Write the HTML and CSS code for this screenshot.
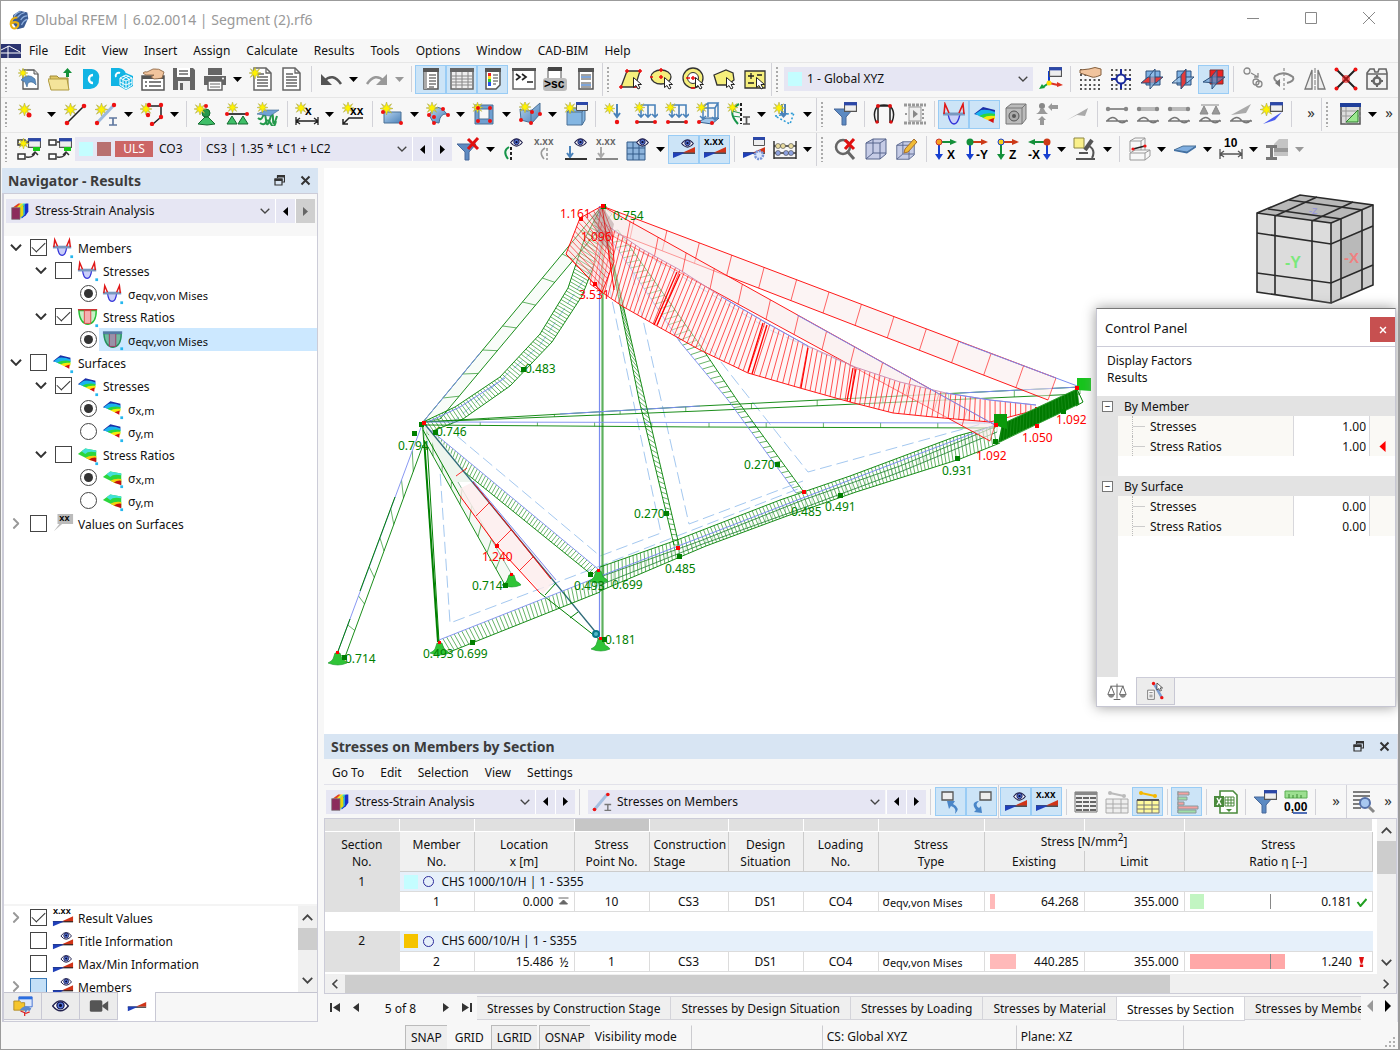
FILE: index.html
```html
<!DOCTYPE html>
<html lang="en">
<head>
<meta charset="utf-8">
<title>Dlubal RFEM | 6.02.0014 | Segment (2).rf6</title>
<link rel="stylesheet" href="styles.css">
</head>
<body>
<svg class="paint" width="0" height="0" aria-hidden="true"><linearGradient id="gb" x1="0" y1="0" x2="1" y2="1"><stop offset="0" stop-color="#b4d3f0"/><stop offset="1" stop-color="#4d82b8"/></linearGradient></svg>
<svg class="defs" aria-hidden="true">
<symbol id="tri" viewBox="0 0 9 5"><path d="M0 0h9L4.500 5z"/></symbol>
<symbol id="left" viewBox="0 0 5 9"><path d="M5 0v9L0 4.500z"/></symbol>
<symbol id="right" viewBox="0 0 5 9"><path d="M0 0v9l5-4.500z"/></symbol>
<symbol id="chev" viewBox="0 0 10 6"><path class="cv" d="M.7.700 5 5 9.300.7" fill="none" stroke="currentColor"/></symbol>
<symbol id="star" viewBox="0 0 14 14"><path d="M7 0l1.500 4.600L12.500 2 9.800 6l4.200 1-4.200 1 2.700 4-4-2.600L7 14 5.500 9.400 1.500 12 4.200 8 0 7l4.200-1L1.500 2l4 2.600z" fill="#fff200" stroke="#a8a44a" stroke-width=".6"/></symbol>
<symbol id="win" viewBox="0 0 12 9"><path d="M.5.500h11v8H.5z" fill="#eee" stroke="#555"/><path d="M0 0h12v3H0z" fill="#2b47a8"/></symbol>
<symbol id="eye" viewBox="0 0 14 10"><path d="M.5 5Q7-3.500 13.500 5 7 13 .5 5z" fill="#fff" stroke="#22224e" stroke-width="1.200"/><circle cx="7" cy="4.500" r="3" fill="#5577d8" stroke="#151552"/><circle cx="7" cy="4.500" r="1.300" fill="#0a0a30"/></symbol>
<symbol id="new" viewBox="0 0 24 24"><path d="M6 3h11l4 4v15H6z" fill="#fff" stroke="#555" stroke-width="1.300"/><path d="M17 3v4h4" fill="#ddd" stroke="#555"/><path d="M4 13q7-8 14-1l1 6q-4-5-8-2l-1 4-2-5z" fill="#5b8fc4" stroke="#3a658f" stroke-width=".6"/><use href="#star" x="1" y="1" width="10" height="10"/></symbol>
<symbol id="open" viewBox="0 0 24 24"><path d="M2 9h7l2 2h9v11H3z" fill="#e0c765" stroke="#a08a35"/><path d="M0 12h19l2 11H3z" fill="#f4e49a" stroke="#b09a40"/><path d="M18 10V6h-3l4.500-5L24 6h-3v4z" fill="#14903a"/></symbol>
<symbol id="dl" viewBox="0 0 24 24"><path d="M4 2h8a8 8 0 0 1 8 10 9 9 0 0 1-9 10H4z" fill="#12b4e4"/><path d="M14 8a4 4 0 1 0 0 8" fill="none" stroke="#fff" stroke-width="2.500"/></symbol>
<symbol id="cubes" viewBox="0 0 24 24"><path d="M1 1h8q6 1 7 6l-4 12H1z" fill="#12b4e4"/><path d="M16 6l7 3v10l-7 4-7-4V9z" fill="#12b4e4"/><path d="M16 8l6 3v7l-6 4-6-4v-7zM10 11l6 3 6-3M16 14v8M13 9l6 3v8M19 9l-6 3v8M10 15l6 3 6-3" fill="none" stroke="#fff"/><path d="M10 6a3 3 0 0 0-4 4" fill="none" stroke="#fff" stroke-width="2"/></symbol>
<symbol id="hand" viewBox="0 0 24 24"><path d="M1 9h22v14H1z" fill="#fff" stroke="#555" stroke-width="1.500"/><path d="M1 9h22v3H1z" fill="#555"/><path d="M4 15h2m2 0h12M4 19h2m2 0h12" stroke="#555" stroke-width="1.600"/><path d="M2 6q2-2 4-1l6-3q6-1 11 3l-2 6q-5 1-8 1l-3-2 3-2H5q-2-1-3-2z" fill="#f1c49d" stroke="#85603f" stroke-width=".8"/></symbol>
<symbol id="save" viewBox="0 0 24 24"><path d="M1 1h20l2 2v20H1z" fill="#666"/><path d="M5 1h13v9H5z" fill="#fff"/><path d="M7 4h9M7 7h9" stroke="#666" stroke-width="1.500"/><path d="M6 14h12v9H6z" fill="#eee"/><path d="M8 16h3v7H8z" fill="#666"/></symbol>
<symbol id="print" viewBox="0 0 24 24"><path d="M5 1h14v7H5z" fill="#666"/><path d="M1 9h22v9H1z" fill="#666"/><path d="M5 14h14v9H5z" fill="#fff" stroke="#666" stroke-width="1.500"/><path d="M7 17h10M7 20h10" stroke="#666"/><circle cx="20" cy="11.500" r="1" fill="#fff"/></symbol>
<symbol id="doc" viewBox="0 0 24 24"><path d="M3 1h12l5 5v17H3z" fill="#fff" stroke="#666" stroke-width="1.500"/><path d="M15 1v5h5M6 7h7M6 10h11M6 13h11M6 16h11M6 19h11" fill="none" stroke="#666" stroke-width="1.300"/></symbol>
<symbol id="docnew" viewBox="0 0 24 24"><use href="#doc" x="2" width="24" height="24"/><use href="#star" x="0" y="0" width="12" height="12"/></symbol>
<symbol id="undo" viewBox="0 0 24 24"><path d="M2 7v11h11z"/><path d="M5 14Q14 5 22 17" fill="none" stroke="currentColor" stroke-width="2.500"/></symbol>
<symbol id="pane" viewBox="0 0 24 24"><path d="M5 2h14v20H5z" fill="#fff" stroke="#555" stroke-width="1.500"/><path d="M4 1h16v4H4z" fill="#555"/><path d="M5 5h3v17H5z" fill="#aaa"/><path d="M10 8h7M10 11h7M10 14h7M10 17h7M10 20h5" stroke="#333" stroke-width="1.200"/></symbol>
<symbol id="panec" viewBox="0 0 24 24"><path d="M5 2h14v16l-4 4H5z" fill="#fff" stroke="#555" stroke-width="1.500"/><path d="M4 1h16v4H4z" fill="#555"/><path d="M7 6h3v3H7z" fill="#e22"/><path d="M7 9h3v3H7z" fill="#fd2"/><path d="M7 12h3v3H7z" fill="#3c3"/><path d="M7 15h3v4H7z" fill="#25e"/><path d="M12 8h5M12 11h5M12 14h5M12 17h3" stroke="#444"/></symbol>
<symbol id="paneb" viewBox="0 0 24 24"><path d="M5 2h14v20H5z" fill="#fff" stroke="#555" stroke-width="1.500"/><path d="M4 1h16v4H4z" fill="#555"/><path d="M7 8h10M7 12h10M7 16h10M7 20h10" stroke="#444"/><path d="M7 10h10M7 18h10" stroke="#58c" stroke-width="1.500"/></symbol>
<symbol id="grid" viewBox="0 0 24 24"><path d="M1 2h22v20H1z" fill="#eee" stroke="#666" stroke-width="1.500"/><path d="M0 1h24v4H0z" fill="#666"/><path d="M1 9h22M1 12h22M1 15h22M1 18h22M6 5v17M12 5v17M18 5v17" stroke="#888"/></symbol>
<symbol id="console" viewBox="0 0 24 24"><path d="M1 2h22v20H1z" fill="#fff" stroke="#666" stroke-width="1.500"/><path d="M0 1h24v3H0z" fill="#555"/><path d="M4 7l4 3-4 3M10 7l4 3-4 3M15 15h6" fill="none" stroke="#222" stroke-width="1.700"/></symbol>
<symbol id="sc" viewBox="0 0 24 24"><path d="M5 1h13v12H5z" fill="#fff" stroke="#555"/><path d="M5 0h14v4H5z" fill="#444"/><rect y="11" width="24" height="13" rx="3" fill="#bbb"/><text x="1" y="21" class="ib">&gt;sc</text></symbol>
<symbol id="cursor" viewBox="0 0 9 13"><path d="M.5.500v10L3 8.500 5 12l2-1-2-3.500h3.500z" fill="#fff" stroke="#222"/></symbol>
<symbol id="selp" viewBox="0 0 24 24"><path d="M8 4h13l-5 16H2z" fill="#f6ef7c" stroke="#333" stroke-width="1.300"/><path d="M6 4h4M8 2v4M19 4h4M21 2v4M0 20h4M2 18v4M14 20h4" stroke="#e11" stroke-width="1.500"/><use href="#cursor" x="14" y="10" width="9" height="13"/></symbol>
<symbol id="sele" viewBox="0 0 24 24"><ellipse cx="11" cy="10" rx="10" ry="7" fill="#f6ef7c" stroke="#333" stroke-width="1.300"/><path d="M9 10h4M11 8v4M9 3h4M11 1v4M0 10h3" stroke="#e11" stroke-width="1.500"/><use href="#cursor" x="14" y="10" width="9" height="13"/></symbol>
<symbol id="selr" viewBox="0 0 24 24"><circle cx="12" cy="11" r="10" fill="#f6ef7c" stroke="#333" stroke-width="1.300"/><circle cx="12" cy="11" r="5.500" fill="#fff" stroke="#333"/><path d="M10 11h4M12 9v4M10 21h4M5 11h4" stroke="#e11" stroke-width="1.500"/><use href="#cursor" x="14" y="10" width="9" height="13"/></symbol>
<symbol id="sell" viewBox="0 0 24 24"><path d="M2 8L14 3l7 3 1 7-7 5H5z" fill="#f6ef7c" stroke="#333" stroke-width="1.300"/><use href="#cursor" x="14" y="10" width="9" height="13"/></symbol>
<symbol id="selm" viewBox="0 0 24 24"><path d="M2 4h20v17H2z" fill="#f6ef7c" stroke="#333" stroke-width="1.300"/><path d="M5 9h6M8 6v6M5 16h6M14 8h5" stroke="#222" stroke-width="1.300"/><use href="#cursor" x="13" y="10" width="9" height="13"/></symbol>
<symbol id="axes" viewBox="0 0 24 24"><path d="M10 16V4" stroke="#0c3ad0" stroke-width="2"/><path d="M10 16l-6 4" stroke="#14a03a" stroke-width="2"/><path d="M0 22l3-5 3 4z" fill="#14a03a"/><path d="M10 16l9 2" stroke="#d32" stroke-width="2"/><path d="M24 18l-6-3v5z" fill="#d32"/><circle cx="10" cy="16" r="2.500" fill="#fd0"/><use href="#win" x="10" y="0" width="13" height="10"/></symbol>
<symbol id="dots" viewBox="0 0 24 24"><path d="M2 3h21M2 8h21M2 13h21M2 18h21M2 22h21" stroke="#555" stroke-width="2" stroke-dasharray="2 2.500"/></symbol>
<symbol id="dothand" viewBox="0 0 24 24"><use href="#dots" width="24" height="24"/><path d="M2 3l9-1q6-3 12 0v6q-7 3-9 2L2 6z" fill="#f1c49d" stroke="#85603f"/></symbol>
<symbol id="dotc" viewBox="0 0 24 24"><use href="#dots" width="24" height="24"/><path d="M12 2v20M2 12h20" stroke="#1a2a9a" stroke-width="2"/><circle cx="12" cy="12" r="4.500" fill="#fff" stroke="#1a2a9a" stroke-width="2"/></symbol>
<symbol id="pl1" viewBox="0 0 24 24"><path d="M6 4h14v14H6z" fill="#7fb2e4" stroke="#2c4f7a"/><path d="M1 16l7-6h15l-7 6z" fill="#e23b3b" stroke="#2c4f7a"/><path d="M10 22V8l5-6v14z" fill="#9cc4ea" fill-opacity=".6" stroke="#2c4f7a"/></symbol>
<symbol id="pl2" viewBox="0 0 24 24"><path d="M6 4h14v14H6z" fill="#7fb2e4" stroke="#2c4f7a"/><path d="M1 16l7-6h15l-7 6z" fill="#9cc4ea" fill-opacity=".7" stroke="#2c4f7a"/><path d="M10 22V8l5-6v14z" fill="#e23b3b" stroke="#2c4f7a"/></symbol>
<symbol id="pl3" viewBox="0 0 24 24"><path d="M8 3h13v14H8z" fill="#e22" stroke="#7a2c2c"/><path d="M1 15l8-5h14l-8 6z" fill="#5e97d2" fill-opacity=".6" stroke="#2c4f7a"/><path d="M10 22V9l5-6v13z" fill="#5e97d2" fill-opacity=".6" stroke="#2c4f7a"/></symbol>
<symbol id="g1" viewBox="0 0 24 24"><g fill="none" stroke="#888" stroke-width="1.300"><circle cx="6" cy="4" r="3"/><circle cx="15" cy="15" r="3"/><circle cx="18" cy="17" r="3"/><path d="M10 6l7 4M17 6v4h-4"/></g></symbol>
<symbol id="g2" viewBox="0 0 24 24"><path d="M12 1v22" stroke="#777" stroke-dasharray="3 2"/><path d="M8 16Q0 13 3 9q9-6 18 1 2 4-6 6" fill="none" stroke="#888" stroke-width="2"/><path d="M8 12v8l-5-4z" fill="#777"/></symbol>
<symbol id="g3" viewBox="0 0 24 24"><path d="M12 1v22" stroke="#777" stroke-dasharray="5 1"/><path d="M9 3v19H2zM15 3v19h7z" fill="#eee" stroke="#777" stroke-width="1.300"/></symbol>
<symbol id="xred" viewBox="0 0 24 24"><path d="M2 2l20 20M22 2L2 22" stroke="#222" stroke-width="2"/><g fill="#e11"><circle cx="2.500" cy="2.500" r="2"/><circle cx="21.500" cy="2.500" r="2"/><circle cx="2.500" cy="21.500" r="2"/><circle cx="21.500" cy="21.500" r="2"/><circle cx="12" cy="12" r="4" fill-opacity=".6"/></g></symbol>
<symbol id="gear" viewBox="0 0 24 24"><path d="M2 6l3-4h4l1 3h3l1-3h7l1 4v16H2z" fill="#f2f2f2" stroke="#666" stroke-width="1.600"/><path d="M2 7h20" stroke="#666" stroke-width="1.500"/><circle cx="12" cy="14" r="3.500" fill="none" stroke="#666" stroke-width="2.500"/><path d="M12 8v3M12 17v3M6 14h3M15 14h3" stroke="#666" stroke-width="2"/></symbol>
<symbol id="node" viewBox="0 0 24 24"><use href="#star" x="1" y="1" width="13" height="13"/><circle cx="12" cy="13" r="2.500" fill="#e11"/></symbol>
<symbol id="line" viewBox="0 0 24 24"><use href="#star" x="1" y="1" width="13" height="13"/><path d="M4 21L21 4" stroke="#222" stroke-width="1.600"/><g fill="#e11"><circle cx="4" cy="21" r="2.300"/><circle cx="21" cy="4" r="2.300"/></g></symbol>
<symbol id="member" viewBox="0 0 24 24"><use href="#star" x="1" y="1" width="13" height="13"/><path d="M3 21L20 3" stroke="#9db9dc" stroke-width="3"/><g fill="#e11"><circle cx="3" cy="21" r="2.200"/><circle cx="20" cy="3" r="2.200"/></g><path d="M15 16h8M15 23h8M19 16v7" stroke="#6078a0" stroke-width="1.700"/></symbol>
<symbol id="memb" viewBox="0 0 24 24"><path d="M3 21L18 3" stroke="#a4bfe0" stroke-width="3.500"/><g fill="#e11"><circle cx="3" cy="21" r="2.200"/><circle cx="19" cy="3" r="2.200"/></g><path d="M15 15h8M15 22h8M19 15v7" stroke="#777" stroke-width="1.700"/></symbol>
<symbol id="poly" viewBox="0 0 24 24"><path d="M9 4h12v11l-8 7" fill="none" stroke="#222" stroke-width="1.500"/><use href="#star" x="0" y="1" width="12" height="12"/><g fill="#e11"><circle cx="9" cy="3" r="2.200"/><circle cx="21" cy="3" r="2.200"/><circle cx="8" cy="13" r="2.200"/><circle cx="21" cy="15" r="2.200"/><circle cx="12" cy="22" r="2.200"/></g></symbol>
<symbol id="sup" viewBox="0 0 24 24"><path d="M4 22l7-7h3l7 7-8 1z" fill="#3fbf68" stroke="#146a30"/><circle cx="12" cy="11" r="4" fill="#25994c" stroke="#146a30"/><use href="#star" x="0" y="1" width="12" height="12"/><circle cx="12" cy="4" r="2" fill="#e11"/></symbol>
<symbol id="sup2" viewBox="0 0 24 24"><path d="M2 12h20" stroke="#222" stroke-width="1.700"/><path d="M2 22l5-8 5 8zM13 22l5-8 5 8z" fill="#3fbf68" stroke="#146a30"/><use href="#star" x="2" y="0" width="11" height="11"/><g fill="#e11"><circle cx="2" cy="12" r="2"/><circle cx="22" cy="12" r="2"/></g></symbol>
<symbol id="sup3" viewBox="0 0 24 24"><path d="M2 16q3 3 5-2t3 4 4-1 3 0 4-3M4 21q4 3 6-1t5 2 5-3" fill="none" stroke="#25994c" stroke-width="2"/><path d="M1 12l9-4h13l-9 6z" fill="#6fa2d6" stroke="#3a668f" stroke-width=".6"/><use href="#star" x="1" y="0" width="11" height="11"/></symbol>
<symbol id="dimx" viewBox="0 0 24 24"><use href="#star" x="0" y="0" width="12" height="12"/><path d="M1 15v8M23 15v8M1 19h22M5 16l-4 3 4 3M19 16l4 3-4 3" fill="none" stroke="#222" stroke-width="1.300"/><text x="10" y="13" class="ib">x</text></symbol>
<symbol id="dimxx" viewBox="0 0 24 24"><use href="#star" x="1" y="0" width="12" height="12"/><path d="M22 16H8l-6 6M2 17v5h5" fill="none" stroke="#222" stroke-width="1.500"/><text x="9" y="13" class="ib">xx</text></symbol>
<symbol id="surf" viewBox="0 0 24 24"><path d="M4 10h17v11H4z" fill="url(#gb)" stroke="#4a7096"/><use href="#star" x="0" y="0" width="13" height="13"/><g fill="#e11"><circle cx="3" cy="10" r="2"/><circle cx="21" cy="21" r="2"/></g></symbol>
<symbol id="surfc" viewBox="0 0 24 24"><path d="M3 13Q11-2 21 12q-7-1-8 9l-6-1z" fill="url(#gb)" stroke="#4a7096"/><use href="#star" x="0" y="0" width="12" height="12"/><g fill="#e11"><circle cx="3" cy="13" r="2"/><circle cx="17" cy="7" r="2"/><circle cx="22" cy="13" r="2"/><circle cx="8" cy="15" r="2"/><circle cx="8" cy="21" r="2"/></g></symbol>
<symbol id="openg" viewBox="0 0 24 24"><path d="M3 3h18v19H3z" fill="#6f9fd0" stroke="#4a7096"/><path d="M7 7h10v10H7z" fill="#f7f7f7" stroke="#4a7096"/><use href="#star" x="0" y="0" width="11" height="11"/><g fill="#e11"><circle cx="6" cy="6" r="2"/><circle cx="18" cy="6" r="2"/><circle cx="6" cy="19" r="2"/><circle cx="18" cy="19" r="2"/></g></symbol>
<symbol id="solid" viewBox="0 0 24 24"><path d="M2 7l7 2 5-1 8-7v11l-8 9-11-3z" fill="url(#gb)" stroke="#4a7096"/><path d="M13 9v12" stroke="#4a7096"/><use href="#star" x="1" y="-1" width="12" height="12"/><g fill="#e11"><circle cx="3" cy="18" r="2"/><circle cx="13" cy="21" r="2"/><circle cx="14" cy="10" r="2"/><circle cx="22" cy="12" r="2"/></g></symbol>
<symbol id="block" viewBox="0 0 24 24"><path d="M3 10l4-4h14v12l-3 5H3z" fill="#84b6e2" stroke="#4a7096"/><path d="M3 10h15v13M18 10l3-4" fill="none" stroke="#4a7096"/><use href="#star" x="0" y="0" width="12" height="12"/><use href="#win" x="12" y="0" width="12" height="9"/></symbol>
<symbol id="ld1" viewBox="0 0 24 24"><use href="#star" x="1" y="1" width="11" height="11"/><path d="M14 2v13M11 11l3 4 3-4" fill="none" stroke="#4a82ba" stroke-width="2"/><circle cx="14" cy="20" r="2.200" fill="#e11"/></symbol>
<symbol id="ld2" viewBox="0 0 24 24"><path d="M7 3h14v12M7 3v12M14 3v12M4 12l3 3 3-3M11 12l3 3 3-3M18 12l3 3 3-3" fill="none" stroke="#4a82ba" stroke-width="1.600"/><path d="M3 20h18" stroke="#222" stroke-width="1.500"/><g fill="#e11"><circle cx="3" cy="20" r="2"/><circle cx="21" cy="20" r="2"/></g><use href="#star" x="0" y="0" width="11" height="11"/></symbol>
<symbol id="ld3" viewBox="0 0 24 24"><path d="M2 20l8-4h13l-7 6z" fill="#9cc4ea" stroke="#35618e"/><path d="M7 5l5-4h10l-3 5H7zM7 5v12M12 1v14M19 6v12M22 1v14M4 14l3 3 3-3M16 15l3 3 3-3" fill="none" stroke="#4a82ba" stroke-width="1.500"/><g fill="#e11"><circle cx="3" cy="20" r="2"/><circle cx="16" cy="21" r="2"/></g><use href="#star" x="0" y="0" width="11" height="11"/></symbol>
<symbol id="imp" viewBox="0 0 24 24"><path d="M14 1v21" stroke="#222" stroke-width="2" stroke-dasharray="3 2"/><path d="M12 2Q-1 9 11 22" fill="none" stroke="#17954a" stroke-width="2"/><path d="M5 9l8 2M5 14l8 1" stroke="#17954a"/><use href="#star" x="0" y="0" width="11" height="11"/><path d="M16 15h7M16 22h7M19.500 15v7" stroke="#555" stroke-width="1.700"/></symbol>
<symbol id="ldf" viewBox="0 0 24 24"><path d="M2 14l19-3-4 11z" fill="none" stroke="#2a9ad6" stroke-width="1.500" stroke-dasharray="2 2"/><path d="M9 2v10M12 2v10" stroke="#4a82ba" stroke-width="2"/><path d="M6 11h9l-4.500 5z" fill="#4a82ba"/><use href="#star" x="0" y="0" width="12" height="12"/></symbol>
<symbol id="funnel" viewBox="0 0 24 24"><path d="M1 7h19l-7 8v8h-4v-8z" fill="#5c8ac2" stroke="#49699a"/></symbol>
<symbol id="funw" viewBox="0 0 24 24"><use href="#funnel" width="24" height="24"/><use href="#win" x="11" y="0" width="13" height="10"/></symbol>
<symbol id="funx" viewBox="0 0 24 24"><use href="#funnel" width="24" height="24"/><path d="M12 2l10 10M22 1L12 12" stroke="#e01010" stroke-width="3"/></symbol>
<symbol id="portal" viewBox="0 0 24 24"><path d="M6 21V4h12v17M4 20Q0 10 6 4q6-2 12 0 6 6 2 16" fill="none" stroke="#222" stroke-width="1.500"/><g fill="#d11"><circle cx="6" cy="4" r="2"/><circle cx="18" cy="4" r="2"/><circle cx="5" cy="20" r="1.700"/><circle cx="19" cy="20" r="1.700"/></g></symbol>
<symbol id="film" viewBox="0 0 24 24"><path d="M1 3h22M1 21h22" stroke="#999" stroke-width="3" stroke-dasharray="3 1"/><path d="M6 5h12v14H6z" fill="#eee" stroke="#999"/><path d="M10 8v8l5-4z" fill="#888"/><path d="M2 12h3M20 7v10" stroke="#999" stroke-width="2" stroke-dasharray="2 2"/></symbol>
<symbol id="mm" viewBox="0 0 24 24"><path d="M6 12h12q-2 10-6 10T6 12z" fill="#c9cef9" stroke="#3030d8" stroke-width="1.300"/><path d="M1 12h22" stroke="#7898c0" stroke-width="3"/><path d="M2 12L3 2l4 9M22 12L21 2l-4 9" fill="none" stroke="#e01818" stroke-width="1.600"/></symbol>
<symbol id="mt" viewBox="0 0 24 24"><path d="M6 11h10q-1 9-5 9t-5-9z" fill="#c9cef9" stroke="#3030d8" stroke-width="1.300"/><path d="M1 11h20" stroke="#7898c0" stroke-width="3"/><path d="M2 11L3 3l3 7M20 11l-1-8-3 7" fill="none" stroke="#e01818" stroke-width="1.600"/><path d="M20 20h3v3h-3z" fill="#25b7ee"/></symbol>
<symbol id="mr" viewBox="0 0 24 24"><path d="M2 5h19q0 14-9 15-9-1-10-15z" fill="#c6f0c6" stroke="#25c035" stroke-width="1.500"/><path d="M8 5h7v14H8z" fill="#f5b0b0" stroke="#d44"/><path d="M1 4h21" stroke="#c33" stroke-width="1.500"/><path d="M20 20h3v3h-3z" fill="#25b7ee"/></symbol>
<symbol id="ms" viewBox="0 0 24 24"><path d="M2 5h19q0 14-9 15-9-1-10-15z" fill="#71bba2" stroke="#25915d" stroke-width="1.500"/><path d="M8 5h7v14H8z" fill="#9a91a8" stroke="#a03860"/><path d="M1 4h21" stroke="#547ba4" stroke-width="3"/><path d="M20 20h3v3h-3z" fill="#25b7ee"/></symbol>
<symbol id="fan" viewBox="0 0 24 24"><path d="M1 12l9-7 12 3-.3 4Q12 9 8 14z" fill="#1a2fa8"/><path d="M2 12l6-4q7-1 14 2v3q-8-1-11 3z" fill="#19b4ee"/><path d="M6 14q7-4 16-2l-.2 3q-6-1-8 2z" fill="#2bd63c"/><path d="M10 16q4-3 12-2v3l-5 2z" fill="#f5e80c"/><path d="M15 18l6-2-.500 5z" fill="#d41010"/></symbol>
<symbol id="ft" viewBox="0 0 24 24"><use href="#fan" y="-1" width="22" height="22"/><path d="M20 20h3v3h-3z" fill="#25b7ee"/></symbol>
<symbol id="fr" viewBox="0 0 24 24"><path d="M1 11l8-6 12 2v12l-8-2z" fill="#2bd63c"/><path d="M5 8l4-3 12 2v2q-9-2-12 2z" fill="#42e0d8"/><path d="M9 15q5-3 12-2v3l-6 2z" fill="#f5d00c"/><path d="M13 17q4-3 8-2v5z" fill="#c41010"/><path d="M20 20h3v3h-3z" fill="#25b7ee"/></symbol>
<symbol id="spk" viewBox="0 0 24 24"><path d="M2 6l5-4h15v15l-4 5H2z" fill="#bbb" stroke="#777"/><path d="M2 6h16v16M18 6l4-4" fill="none" stroke="#777"/><circle cx="10" cy="14" r="5" fill="#aaa" stroke="#555"/><circle cx="10" cy="14" r="2" fill="#555"/></symbol>
<symbol id="per" viewBox="0 0 24 24"><circle cx="7" cy="4" r="3" fill="#888"/><path d="M1 12q4-2 4-5h4q1 3 4 5zM7 14l-4 4h2v5h4v-5h2zM13 5l4-4v2h6v4h-6v2z" fill="#999"/></symbol>
<symbol id="wedge" viewBox="0 0 24 24"><path d="M1 18L22 6l-3 8-8-1z" fill="#aaa"/></symbol>
<symbol id="w1" viewBox="0 0 24 24"><path d="M3 7h18" stroke="#777" stroke-width="1.600"/><circle cx="3" cy="7" r="2.200" fill="#888"/><circle cx="21" cy="7" r="2.200" fill="#888"/><path d="M1 19h22M2 19q6-7 11 0 5 4 9-1" fill="none" stroke="#777" stroke-width="1.500"/></symbol>
<symbol id="w2" viewBox="0 0 24 24"><path d="M3 7h18" stroke="#bbb" stroke-width="4"/><circle cx="3" cy="7" r="2.200" fill="#888"/><circle cx="21" cy="7" r="2.200" fill="#888"/><path d="M1 19h22M2 19q6-7 11 0 5 4 9-1" fill="none" stroke="#777" stroke-width="1.500"/></symbol>
<symbol id="w3" viewBox="0 0 24 24"><path d="M3 3h18M6 4l-4 8h8zM18 4l-4 8h8z" fill="#999" stroke="#888"/><path d="M1 19h22M2 19q6-7 11 0 5 4 9-1" fill="none" stroke="#777" stroke-width="1.500"/></symbol>
<symbol id="w4" viewBox="0 0 24 24"><path d="M2 13L22 2l-5 9z" fill="#aaa"/><path d="M1 19h22M2 19q6-7 11 0 5 4 9-1" fill="none" stroke="#777" stroke-width="1.500"/></symbol>
<symbol id="w5" viewBox="0 0 24 24"><path d="M3 22L22 10l-7 8z" fill="#4a5cf0"/><use href="#star" x="0" y="1" width="13" height="13"/><use href="#win" x="10" y="0" width="13" height="10"/></symbol>
<symbol id="tang" viewBox="0 0 24 24"><path d="M3 2h19v20H3z" fill="#ddd" stroke="#555" stroke-width="1.500"/><path d="M2 1h21v4H2z" fill="#1f3f9a"/><path d="M3 9h20M3 14h20M8 5v17" stroke="#999"/><path d="M8 20L20 8v12z" fill="#9be88f" stroke="#2c7c2c"/></symbol>
<symbol id="flow" viewBox="0 0 24 24"><path d="M1 3h7v5H1zM1 17h7v5H1z" fill="#fff" stroke="#333" stroke-width="1.500"/><use href="#win" x="11" y="1" width="13" height="10"/><path d="M16 10h7v4h-7z" fill="#18c818"/><path d="M9 5h3M9 20q8 1 9-5M15 18l3-3 3 3" fill="none" stroke="#333" stroke-width="1.500"/></symbol>
<symbol id="flown" viewBox="0 0 24 24"><use href="#flow" width="24" height="24"/><use href="#star" x="1" y="1" width="11" height="11"/></symbol>
<symbol id="vg" viewBox="0 0 24 24"><path d="M9 10v13" stroke="#222" stroke-width="2" stroke-dasharray="3 2"/><path d="M7 10Q0 14 6 22" fill="none" stroke="#17954a" stroke-width="2"/><use href="#eye" x="8" y="1" width="13" height="9"/></symbol>
<symbol id="vx" viewBox="0 0 24 24"><path d="M14 11v12" stroke="#aaa" stroke-width="2" stroke-dasharray="3 2"/><path d="M12 11Q5 15 11 22" fill="none" stroke="#999" stroke-width="1.500"/><text x="1" y="8" class="ixg">x.xx</text></symbol>
<symbol id="ve" viewBox="0 0 24 24"><path d="M6 9v10M3 16l3 4 3-4" fill="none" stroke="#4a82ba" stroke-width="2"/><path d="M1 22h22" stroke="#333" stroke-width="2"/><use href="#eye" x="10" y="1" width="13" height="9"/></symbol>
<symbol id="vxe" viewBox="0 0 24 24"><path d="M6 10v9M3 16l3 4 3-4" fill="none" stroke="#aaa" stroke-width="2"/><path d="M1 22h22" stroke="#888" stroke-width="2"/><text x="1" y="8" class="ixg">x.xx</text></symbol>
<symbol id="vgr" viewBox="0 0 24 24"><path d="M1 5h18v18H1z" fill="#8db4dc" stroke="#335a88"/><path d="M1 11h18M1 17h18M7 5v18M13 5v18" stroke="#335a88"/><use href="#eye" x="10" y="1" width="13" height="9"/></symbol>
<symbol id="dg" viewBox="0 0 24 24"><path d="M1 16h22" stroke="#222" stroke-width="1.500"/><path d="M1 15.500h13L1 21z" fill="#2040b8"/><path d="M11 15.500L23 10v5.500z" fill="#d03418"/></symbol>
<symbol id="dgc" viewBox="0 4 24 24"><use href="#dg" width="24" height="24"/></symbol>
<symbol id="dge" viewBox="0 0 24 24"><use href="#dg" width="24" height="24"/><use href="#eye" x="9" y="2" width="13" height="9"/></symbol>
<symbol id="dgx" viewBox="0 0 24 24"><use href="#dg" width="24" height="24"/><text x="1" y="8" class="ix">x.xx</text></symbol>
<symbol id="dgw" viewBox="0 0 24 24"><use href="#dg" width="24" height="24"/><use href="#win" x="11" y="0" width="12" height="9"/><circle cx="17" cy="18" r="4" fill="#dce6fa" stroke="#7894d8" stroke-width="2.500" stroke-dasharray="2 1"/></symbol>
<symbol id="aba" viewBox="0 0 24 24"><path d="M1 4v18M23 4v18M1 9h22M1 16h22M1 21h22" stroke="#333" stroke-width="1.500"/><g stroke="#444" stroke-width=".6"><g fill="#e9dca0"><circle cx="5" cy="9" r="2.500"/><circle cx="10" cy="9" r="2.500"/><circle cx="18" cy="9" r="2.500"/></g><g fill="#8ea2e0"><circle cx="5" cy="16" r="2.500"/><circle cx="13" cy="16" r="2.500"/><circle cx="18" cy="16" r="2.500"/></g></g></symbol>
<symbol id="zoomx" viewBox="0 0 24 24"><circle cx="10" cy="10" r="7" fill="none" stroke="#666" stroke-width="2.500"/><path d="M14 14l7 8" stroke="#666" stroke-width="3"/><path d="M12 3l9 9M21 2l-9 10" stroke="#e01010" stroke-width="3"/></symbol>
<symbol id="cube" viewBox="0 0 24 24"><path d="M2 6l7-4h13v15l-6 5H2z" fill="#c6cce6" stroke="#56648c"/><path d="M2 6h14v16M16 6l6-4M9 2v14L2 22M9 16h13" fill="none" stroke="#56648c"/></symbol>
<symbol id="cubep" viewBox="0 0 24 24"><use href="#cube" y="3" width="21" height="21"/><path d="M10 12L19 2l3 3-9 10-4 1z" fill="#f0bb35" stroke="#a66f2e"/></symbol>
<symbol id="ax" viewBox="0 0 24 24"><path d="M5 5v14" stroke="#1840d0" stroke-width="2"/><path d="M1 17h8l-4 6z" fill="#1840d0"/><path d="M5 5h12" stroke="#14903a" stroke-width="2"/><path d="M16 2v6l7-3z" fill="#14903a"/><circle cx="5" cy="5" r="3" fill="#f7a01c" stroke="#c33"/><text x="13" y="22" class="ib">X</text></symbol>
<symbol id="ay" viewBox="0 0 24 24"><path d="M5 5v14" stroke="#1840d0" stroke-width="2"/><path d="M1 17h8l-4 6z" fill="#1840d0"/><path d="M5 5h12" stroke="#cc3a18" stroke-width="2"/><path d="M16 2v6l7-3z" fill="#cc3a18"/><circle cx="5" cy="5" r="3.500" fill="#14903a"/><text x="11" y="22" class="ib">-Y</text></symbol>
<symbol id="az" viewBox="0 0 24 24"><path d="M5 5v14" stroke="#14903a" stroke-width="2"/><path d="M1 17h8l-4 6z" fill="#14903a"/><path d="M5 5h12" stroke="#cc3a18" stroke-width="2"/><path d="M16 2v6l7-3z" fill="#cc3a18"/><circle cx="5" cy="5" r="3" fill="#f7d01c" stroke="#1840d0"/><text x="13" y="22" class="ib">Z</text></symbol>
<symbol id="amx" viewBox="0 0 24 24"><path d="M20 5v14" stroke="#1840d0" stroke-width="2"/><path d="M16 17h8l-4 6z" fill="#1840d0"/><path d="M20 5H7" stroke="#14903a" stroke-width="2"/><path d="M8 2v6L1 5z" fill="#14903a"/><circle cx="20" cy="5" r="3.500" fill="#cc3a18"/><text x="1" y="22" class="ib">-X</text></symbol>
<symbol id="mic" viewBox="0 0 24 24"><path d="M1 1h10v10H1z" fill="#faf08a" stroke="#8c8640"/><path d="M19 3l-7 10" stroke="#555" stroke-width="4"/><path d="M16 9q7 4 3 12M3 22h19M6 16h9" fill="none" stroke="#555" stroke-width="2"/></symbol>
<symbol id="box" viewBox="0 0 24 24"><path d="M3 4l5-3h10v12M3 4v11M3 4h11v9M14 4l4-3M3 16l5-3h15v6l-5 4H3zM3 16h15v7M18 16l5-3" fill="none" stroke="#999"/><path d="M6 12l12-3" stroke="#222" stroke-width="1.500"/><circle cx="6" cy="12" r="1.600" fill="#e11"/><circle cx="18" cy="9" r="1.600" fill="#e11"/></symbol>
<symbol id="slab" viewBox="0 0 24 24"><path d="M1 13l9-4h13l-9 6z" fill="#7faee0" stroke="#4a7096"/><path d="M1 13v1l13 2.500 9-6V9l-9 6z" fill="#3f6fa4"/></symbol>
<symbol id="d10" viewBox="0 0 24 24"><path d="M1 12v10M23 12v10M1 17h22M5 14l-4 3 4 3M19 14l4 3-4 3" fill="none" stroke="#555" stroke-width="1.300"/><text x="5" y="10" class="ib">10</text></symbol>
<symbol id="ib" viewBox="0 0 24 24"><path d="M9 7l5-5h9v17H9z" fill="#c4c4c4"/><path d="M9 11h14v4H9z" fill="#999"/><path d="M1 8h11v3H8v9h4v3H1v-3h4v-9H1z" fill="#777"/></symbol>
<symbol id="ssa" viewBox="0 0 24 24"><path d="M3 8l7-5 3 0-5 5z" fill="#e3411d"/><path d="M8 8l5-5h3l-5 5z" fill="#f5e80c"/><path d="M11 8l5-5h3l-4 5z" fill="#25d8c8"/><path d="M14 8l5-5h3v10l-3 4-5 4z" fill="#1a2fc8"/><path d="M12 8h3l3-4v12l-5 5z" fill="#25a8d8"/><path d="M11 8l5-4v13l-5 4z" fill="#e8d80c"/><path d="M2 8h10v14H2z" fill="#8c2c5c" stroke="#777" stroke-width=".8"/></symbol>
<symbol id="xx" viewBox="0 0 24 24"><path d="M6 1h17v11H11l-9 8 6-8H6z" fill="#bbb"/><text x="8" y="9" class="ix">xx</text></symbol>
<symbol id="fold" viewBox="0 0 24 24"><path d="M7 1h16v12H7z" fill="#dde8fa" stroke="#2b5fd0"/><path d="M7 1h16v3H7z" fill="#2b6fe0"/><path d="M1 6h7l2 2h4v9H1z" fill="#f5c52c" stroke="#a88420"/><path d="M8 17q6-8 14-2l-2 3-3-1-2 4-1-4z" fill="#5c8ad0"/><path d="M9 18l5 2v4M15 21l5-2" stroke="#d22" stroke-width="1.500" fill="none"/></symbol>
<symbol id="cam" viewBox="0 0 24 24"><rect x="1" y="5" width="15" height="14" rx="2" fill="#555"/><path d="M16 11l7-5v12l-7-5z" fill="#555"/></symbol>
<symbol id="sel1" viewBox="0 0 24 24"><path d="M3 2h11v8H3z" fill="#eee" stroke="#555" stroke-width="1.300"/><path d="M8 11h8l-2 3q8 4 2 10 2-6-4-8l-2 3z" fill="#4a86c8"/></symbol>
<symbol id="sel2" viewBox="0 0 24 24"><path d="M10 2h11v8H10z" fill="#eee" stroke="#555" stroke-width="1.300"/><path d="M9 11q-5 4 0 7l2-2 1 7-8-1 2-2q-6-8 3-9z" fill="#4a86c8"/></symbol>
<symbol id="t1" viewBox="0 0 24 24"><path d="M1 2h22v20H1z" fill="#eee" stroke="#777"/><path d="M1 2h22v3H1z" fill="#888"/><path d="M2 8h20M2 12h20M2 16h20M2 20h20" stroke="#666" stroke-width="2" stroke-dasharray="6 1"/></symbol>
<symbol id="t2" viewBox="0 0 24 24"><path d="M5 3l14 3" stroke="#bbb" stroke-width="2"/><circle cx="5" cy="3" r="2" fill="#bbb"/><circle cx="19" cy="6" r="2" fill="#bbb"/><path d="M1 9h22v14H1zM1 14h22M1 18h22M8 9v14M16 9v14" fill="#eee" stroke="#aaa"/></symbol>
<symbol id="t3" viewBox="0 0 24 24"><path d="M5 3l14 3" stroke="#f5b800" stroke-width="2"/><circle cx="5" cy="3" r="2" fill="#f5b800"/><circle cx="19" cy="6" r="2" fill="#f5b800"/><path d="M1 10h22v13H1zM1 15h22M1 19h22M8 10v13M16 10v13" fill="#fffa9c" stroke="#777"/><path d="M1 9h22v2H1z" fill="#555"/></symbol>
<symbol id="bars" viewBox="0 0 24 24"><path d="M3 1v22" stroke="#888"/><g stroke="#8a9a9c"><path d="M3 2h11v3H3zM3 12h6v3H3z" fill="#f5a0a0"/><path d="M3 7h9v3H3zM3 20h18v3H3z" fill="#9fdfa8"/><path d="M3 16h20v3H3z" fill="#f5a0a0"/></g></symbol>
<symbol id="xls" viewBox="0 0 24 24"><path d="M6 1h13l4 4v18H6z" fill="#fff" stroke="#4a8a3c" stroke-width="1.600"/><path d="M11 7h9v9h-9zM11 10h9M11 13h9M14 7v9M17 7v9" fill="none" stroke="#4a8a3c"/><path d="M0 6h10v11H0z" fill="#4a8a3c"/><path d="M3 8l4 7M7 8l-4 7" stroke="#fff" stroke-width="1.500"/><path d="M12 19h6l-3 3z" fill="#4a8a3c"/></symbol>
<symbol id="dec" viewBox="0 0 24 24"><path d="M1 1h22v7H1z" fill="#9cdf90" stroke="#5ab050"/><path d="M5 4v4M9 5v3M13 4v4M17 5v3" stroke="#3a8a30"/><text x="0" y="21" class="ib">0,00</text><path d="M9 23h14" stroke="#1840a0" stroke-width="1.500"/></symbol>
<symbol id="find" viewBox="0 0 24 24"><path d="M1 2h17M1 6h17M1 10h17M1 14h10M1 18h8" stroke="#555" stroke-width="1.500"/><circle cx="13" cy="13" r="5" fill="#a8c8f0" stroke="#5570a8" stroke-width="2"/><path d="M17 17l5 5" stroke="#888" stroke-width="3"/></symbol>
<symbol id="scale" viewBox="0 0 24 24"><path d="M12 2v18M8 21h8M4 5h16M5 5L1 15h8zM19 5l-4 10h8z" fill="none" stroke="#666" stroke-width="1.200"/><path d="M1 15h8q-1 4-4 4t-4-4zM15 15h8q-1 4-4 4t-4-4z" fill="#888"/></symbol>
<symbol id="list" viewBox="0 0 24 24"><path d="M2 11h8v11H2z" fill="#fff" stroke="#666"/><path d="M4 14h4M4 17h4M4 19h4" stroke="#666"/><path d="M10 4l9 16" stroke="#7f9fd0" stroke-width="3"/><circle cx="9" cy="3" r="2" fill="#e11"/><circle cx="19" cy="20" r="2" fill="#e11"/><use href="#cursor" x="12" y="2" width="9" height="11"/></symbol>
<symbol id="restore" viewBox="0 0 11 11"><path d="M3.500 3V1h7v6h-2M1 4h7v6H1z" fill="none" stroke="#333" stroke-width="1.200"/><path d="M3 0h8v2.500H3zM.500 3.500h8V6h-8z" fill="#333"/></symbol>
<symbol id="close" viewBox="0 0 11 11"><path d="M1.500 1.500l8 8M9.500 1.500l-8 8" stroke="currentColor" stroke-width="2"/></symbol>
</svg>

<header class="titlebar">
  <svg class="logo" viewBox="0 0 24 24"><path d="M5 6l8-5 9 2 1 7-5 11-8 2-6-8z" fill="#3a5a92"/><path d="M6 8q3-5 8-6M10 9q4-5 9-6M14 12q3-5 8-5M15 18q2-5 7-7" fill="none" stroke="#8fb0de" stroke-width="1.500"/><path d="M10 9Q2 9 2 17q1 6 6 5 4-2 3-6-3-3-8 0" fill="none" stroke="#e8b012" stroke-width="2.500"/></svg>
  <h1>Dlubal RFEM | 6.02.0014 | Segment (2).rf6</h1>
  <div class="wincmds">
    <button aria-label="Minimize"><svg viewBox="0 0 12 12"><path d="M0 6.500h12"/></svg></button>
    <button aria-label="Maximize"><svg viewBox="0 0 12 12"><path d="M.5.500h11v11H.5z"/></svg></button>
    <button aria-label="Close window"><svg viewBox="0 0 12 12"><path d="M0 0l12 12M12 0L0 12"/></svg></button>
  </div>
</header>

<nav class="menubar">
  <svg class="flag" viewBox="0 0 20 14"><path d="M0 0h20v14H0z" fill="#2b3470"/><path d="M0 9h20M0 6l8-4 11 6M7 2v12" stroke="#fff" fill="none"/></svg>
  <button>File</button><button>Edit</button><button>View</button><button>Insert</button><button>Assign</button><button>Calculate</button><button>Results</button><button>Tools</button><button>Options</button><button>Window</button><button>CAD-BIM</button><button>Help</button>
</nav>

<div class="toolbar">
  <i class="grip"></i>
  <button class="tb" aria-label="New model"><svg><use href="#new"/></svg></button>
  <button class="tb" aria-label="Open model"><svg><use href="#open"/></svg></button>
  <button class="tb" aria-label="Dlubal Center"><svg><use href="#dl"/></svg></button>
  <button class="tb" aria-label="Block manager"><svg><use href="#cubes"/></svg></button>
  <button class="tb" aria-label="Base data"><svg><use href="#hand"/></svg></button>
  <button class="tb" aria-label="Save"><svg><use href="#save"/></svg></button>
  <button class="tb" aria-label="Print"><svg><use href="#print"/></svg></button>
  <button class="dd" aria-label="Print options"><svg><use href="#tri"/></svg></button>
  <button class="tb" aria-label="New report"><svg><use href="#docnew"/></svg></button>
  <button class="tb" aria-label="Report"><svg><use href="#doc"/></svg></button>
  <i class="sep"></i>
  <button class="tb dark" aria-label="Undo"><svg><use href="#undo"/></svg></button>
  <button class="dd" aria-label="Undo list"><svg><use href="#tri"/></svg></button>
  <button class="tb pale flip" aria-label="Redo"><svg><use href="#undo"/></svg></button>
  <button class="dd pale" aria-label="Redo list"><svg><use href="#tri"/></svg></button>
  <i class="sep"></i>
  <button class="tb on" aria-label="Navigator"><svg><use href="#pane"/></svg></button>
  <button class="tb on" aria-label="Tables"><svg><use href="#grid"/></svg></button>
  <button class="tb on" aria-label="Control panel"><svg><use href="#panec"/></svg></button>
  <button class="tb" aria-label="Console"><svg><use href="#console"/></svg></button>
  <button class="tb" aria-label="Script"><svg><use href="#sc"/></svg></button>
  <button class="tb" aria-label="Plausibility"><svg><use href="#paneb"/></svg></button>
  <i class="sep line"></i><i class="grip"></i>
  <button class="tb" aria-label="Select by rhomboid"><svg><use href="#selp"/></svg></button>
  <button class="tb" aria-label="Select by ellipse"><svg><use href="#sele"/></svg></button>
  <button class="tb" aria-label="Select by ring"><svg><use href="#selr"/></svg></button>
  <button class="tb" aria-label="Select by polygon"><svg><use href="#sell"/></svg></button>
  <button class="tb" aria-label="Add or remove selection"><svg><use href="#selm"/></svg></button>
  <i class="sep line"></i><i class="grip"></i>
  <label class="combo cs"><i class="sw cyan"></i><select aria-label="Coordinate system"><option>1 - Global XYZ</option></select><svg class="chev"><use href="#chev"/></svg></label>
  <button class="tb" aria-label="Coordinate systems"><svg><use href="#axes"/></svg></button>
  <i class="sep"></i>
  <button class="tb" aria-label="Edit grid"><svg><use href="#dothand"/></svg></button>
  <button class="tb" aria-label="Grid origin"><svg><use href="#dotc"/></svg></button>
  <button class="tb" aria-label="Plane XY"><svg><use href="#pl1"/></svg></button>
  <button class="tb" aria-label="Plane YZ"><svg><use href="#pl2"/></svg></button>
  <button class="tb on" aria-label="Plane XZ"><svg><use href="#pl3"/></svg></button>
  <i class="sep"></i>
  <button class="tb" aria-label="Copy"><svg><use href="#g1"/></svg></button>
  <button class="tb" aria-label="Rotate"><svg><use href="#g2"/></svg></button>
  <button class="tb" aria-label="Mirror"><svg><use href="#g3"/></svg></button>
  <button class="tb" aria-label="Connect"><svg><use href="#xred"/></svg></button>
  <button class="tb" aria-label="Settings"><svg><use href="#gear"/></svg></button>
</div>

<div class="toolbar">
  <i class="grip"></i>
  <button class="tb" aria-label="New node"><svg><use href="#node"/></svg></button>
  <button class="dd" aria-label="Node types"><svg><use href="#tri"/></svg></button>
  <button class="tb" aria-label="New line"><svg><use href="#line"/></svg></button>
  <button class="tb" aria-label="New member"><svg><use href="#member"/></svg></button>
  <button class="dd" aria-label="Member types"><svg><use href="#tri"/></svg></button>
  <button class="tb" aria-label="New polyline"><svg><use href="#poly"/></svg></button>
  <button class="dd" aria-label="Polyline types"><svg><use href="#tri"/></svg></button>
  <i class="sep"></i>
  <button class="tb" aria-label="Nodal support"><svg><use href="#sup"/></svg></button>
  <button class="tb" aria-label="Line support"><svg><use href="#sup2"/></svg></button>
  <button class="tb" aria-label="Surface support"><svg><use href="#sup3"/></svg></button>
  <i class="sep"></i>
  <button class="tb" aria-label="Dimension"><svg><use href="#dimx"/></svg></button>
  <button class="dd" aria-label="Dimension types"><svg><use href="#tri"/></svg></button>
  <button class="tb" aria-label="Note"><svg><use href="#dimxx"/></svg></button>
  <i class="sep"></i>
  <button class="tb" aria-label="New surface"><svg><use href="#surf"/></svg></button>
  <button class="dd" aria-label="Surface types"><svg><use href="#tri"/></svg></button>
  <button class="tb" aria-label="Curved surface"><svg><use href="#surfc"/></svg></button>
  <button class="dd" aria-label="Curved surface types"><svg><use href="#tri"/></svg></button>
  <button class="tb" aria-label="Opening"><svg><use href="#openg"/></svg></button>
  <button class="dd" aria-label="Opening types"><svg><use href="#tri"/></svg></button>
  <button class="tb" aria-label="Solid"><svg><use href="#solid"/></svg></button>
  <button class="dd" aria-label="Solid types"><svg><use href="#tri"/></svg></button>
  <button class="tb" aria-label="Block"><svg><use href="#block"/></svg></button>
  <i class="sep"></i>
  <button class="tb" aria-label="Nodal load"><svg><use href="#ld1"/></svg></button>
  <button class="tb" aria-label="Member load"><svg><use href="#ld2"/></svg></button>
  <button class="tb" aria-label="Line load"><svg><use href="#ld2"/></svg></button>
  <button class="tb" aria-label="Surface load"><svg><use href="#ld3"/></svg></button>
  <button class="tb" aria-label="Imperfection"><svg><use href="#imp"/></svg></button>
  <button class="dd" aria-label="Imperfection types"><svg><use href="#tri"/></svg></button>
  <button class="tb" aria-label="Free load"><svg><use href="#ldf"/></svg></button>
  <button class="dd" aria-label="Free load types"><svg><use href="#tri"/></svg></button>
  <i class="sep line"></i><i class="grip"></i>
  <button class="tb" aria-label="Result filter"><svg><use href="#funw"/></svg></button>
  <i class="sep"></i>
  <button class="tb" aria-label="Deformation"><svg><use href="#portal"/></svg></button>
  <button class="tb" aria-label="Animation"><svg><use href="#film"/></svg></button>
  <i class="sep"></i>
  <button class="tb on" aria-label="Member results"><svg><use href="#mm"/></svg></button>
  <button class="tb on" aria-label="Surface results"><svg><use href="#fan"/></svg></button>
  <button class="tb" aria-label="Solid results"><svg><use href="#spk"/></svg></button>
  <button class="tb" aria-label="Reactions"><svg><use href="#per"/></svg></button>
  <button class="tb" aria-label="Sections"><svg><use href="#wedge"/></svg></button>
  <i class="sep"></i>
  <button class="tb" aria-label="Line diagram"><svg><use href="#w1"/></svg></button>
  <button class="tb" aria-label="Member diagram"><svg><use href="#w2"/></svg></button>
  <button class="tb" aria-label="Member set diagram"><svg><use href="#w2"/></svg></button>
  <button class="tb" aria-label="Support diagram"><svg><use href="#w3"/></svg></button>
  <button class="tb" aria-label="Section diagram"><svg><use href="#w4"/></svg></button>
  <button class="tb" aria-label="New section"><svg><use href="#w5"/></svg></button>
  <i class="sep"></i>
  <button class="more end" aria-label="More commands">»</button>
  <i class="sep line"></i><i class="grip"></i>
  <button class="tb" aria-label="Table tools"><svg><use href="#tang"/></svg></button>
  <button class="dd" aria-label="Table tool list"><svg><use href="#tri"/></svg></button>
  <button class="more" aria-label="More tools">»</button>
</div>

<div class="toolbar">
  <i class="grip"></i>
  <button class="tb" aria-label="New load case"><svg><use href="#flown"/></svg></button>
  <button class="tb" aria-label="Load cases"><svg><use href="#flow"/></svg></button>
  <label class="combo lc"><i class="sw cyan"></i><i class="sw rose"></i><b class="uls">ULS</b><span class="co">CO3</span><select aria-label="Load combination"><option>CS3 | 1.35 * LC1 + LC2</option></select><svg class="chev"><use href="#chev"/></svg></label>
  <button class="step" aria-label="Previous load case"><svg><use href="#left"/></svg></button>
  <button class="step" aria-label="Next load case"><svg><use href="#right"/></svg></button>
  <button class="tb" aria-label="Clear filter"><svg><use href="#funx"/></svg></button>
  <button class="dd" aria-label="Filter list"><svg><use href="#tri"/></svg></button>
  <button class="tb" aria-label="Show imperfections"><svg><use href="#vg"/></svg></button>
  <button class="tb" aria-label="Imperfection values"><svg><use href="#vx"/></svg></button>
  <button class="tb" aria-label="Show loads"><svg><use href="#ve"/></svg></button>
  <button class="tb" aria-label="Load values"><svg><use href="#vxe"/></svg></button>
  <button class="tb" aria-label="Show mesh"><svg><use href="#vgr"/></svg></button>
  <button class="dd" aria-label="Mesh list"><svg><use href="#tri"/></svg></button>
  <button class="tb on" aria-label="Show results"><svg><use href="#dge"/></svg></button>
  <button class="tb on" aria-label="Show result values"><svg><use href="#dgx"/></svg></button>
  <i class="sep"></i>
  <button class="tb" aria-label="Result settings"><svg><use href="#dgw"/></svg></button>
  <button class="tb" aria-label="Calculate"><svg><use href="#aba"/></svg></button>
  <button class="dd" aria-label="Calculate list"><svg><use href="#tri"/></svg></button>
  <i class="sep line"></i><i class="grip"></i>
  <button class="tb" aria-label="Cancel zoom"><svg><use href="#zoomx"/></svg></button>
  <button class="tb" aria-label="Perspective"><svg><use href="#cube"/></svg></button>
  <button class="tb" aria-label="Edit view"><svg><use href="#cubep"/></svg></button>
  <i class="sep"></i>
  <button class="tb" aria-label="View X"><svg><use href="#ax"/></svg></button>
  <button class="tb" aria-label="View -Y"><svg><use href="#ay"/></svg></button>
  <button class="tb" aria-label="View Z"><svg><use href="#az"/></svg></button>
  <button class="tb" aria-label="View -X"><svg><use href="#amx"/></svg></button>
  <button class="dd" aria-label="View list"><svg><use href="#tri"/></svg></button>
  <button class="tb" aria-label="Inspect"><svg><use href="#mic"/></svg></button>
  <button class="dd" aria-label="Inspect list"><svg><use href="#tri"/></svg></button>
  <i class="sep"></i>
  <button class="tb" aria-label="Clipping box"><svg><use href="#box"/></svg></button>
  <button class="dd" aria-label="Clipping list"><svg><use href="#tri"/></svg></button>
  <button class="tb" aria-label="Surface display"><svg><use href="#slab"/></svg></button>
  <button class="dd" aria-label="Surface display list"><svg><use href="#tri"/></svg></button>
  <button class="tb" aria-label="Dimension display"><svg><use href="#d10"/></svg></button>
  <button class="dd" aria-label="Dimension display list"><svg><use href="#tri"/></svg></button>
  <button class="tb" aria-label="Section display"><svg><use href="#ib"/></svg></button>
  <button class="dd pale" aria-label="Section display list"><svg><use href="#tri"/></svg></button>
</div>

<main>
<aside class="navigator">
  <header class="dock"><h2>Navigator - Results</h2><button aria-label="Float navigator"><svg><use href="#restore"/></svg></button><button aria-label="Close navigator"><svg><use href="#close"/></svg></button></header>
  <div class="navframe">
    <div class="navcombo"><label class="combo"><svg class="ci"><use href="#ssa"/></svg><select aria-label="Result type"><option>Stress-Strain Analysis</option></select><svg class="chev"><use href="#chev"/></svg></label><button class="step" aria-label="Previous result"><svg><use href="#left"/></svg></button><button class="step off" aria-label="Next result"><svg><use href="#right"/></svg></button></div>
    <ul class="tree grow">
      <li><svg class="ar"><use href="#chev"/></svg><label><input type="checkbox" checked><svg class="ti"><use href="#mt"/></svg><span>Members</span></label></li>
      <li class="l1"><svg class="ar"><use href="#chev"/></svg><label><input type="checkbox"><svg class="ti"><use href="#mt"/></svg><span>Stresses</span></label></li>
      <li class="l2"><label><input type="radio" name="ms" checked><svg class="ti"><use href="#mt"/></svg><span>σ<small>eqv,von Mises</small></span></label></li>
      <li class="l1"><svg class="ar"><use href="#chev"/></svg><label><input type="checkbox" checked><svg class="ti"><use href="#mr"/></svg><span>Stress Ratios</span></label></li>
      <li class="l2 sel"><label><input type="radio" name="mr" checked><svg class="ti"><use href="#ms"/></svg><span>σ<small>eqv,von Mises</small></span></label></li>
      <li><svg class="ar"><use href="#chev"/></svg><label><input type="checkbox"><svg class="ti"><use href="#ft"/></svg><span>Surfaces</span></label></li>
      <li class="l1"><svg class="ar"><use href="#chev"/></svg><label><input type="checkbox" checked><svg class="ti"><use href="#ft"/></svg><span>Stresses</span></label></li>
      <li class="l2"><label><input type="radio" name="ss" checked><svg class="ti"><use href="#ft"/></svg><span>σ<small>x,m</small></span></label></li>
      <li class="l2"><label><input type="radio" name="ss"><svg class="ti"><use href="#ft"/></svg><span>σ<small>y,m</small></span></label></li>
      <li class="l1"><svg class="ar"><use href="#chev"/></svg><label><input type="checkbox"><svg class="ti"><use href="#fr"/></svg><span>Stress Ratios</span></label></li>
      <li class="l2"><label><input type="radio" name="sr" checked><svg class="ti"><use href="#fr"/></svg><span>σ<small>x,m</small></span></label></li>
      <li class="l2"><label><input type="radio" name="sr"><svg class="ti"><use href="#fr"/></svg><span>σ<small>y,m</small></span></label></li>
      <li><svg class="ar shut"><use href="#chev"/></svg><label><input type="checkbox"><svg class="ti"><use href="#xx"/></svg><span>Values on Surfaces</span></label></li>
    </ul>
    <div class="lower">
      <ul class="tree">
        <li><svg class="ar shut"><use href="#chev"/></svg><label><input type="checkbox" checked><svg class="ti"><use href="#dgx"/></svg><span>Result Values</span></label></li>
        <li class="leaf"><label><input type="checkbox"><svg class="ti"><use href="#dge"/></svg><span>Title Information</span></label></li>
        <li class="leaf"><label><input type="checkbox"><svg class="ti"><use href="#dge"/></svg><span>Max/Min Information</span></label></li>
        <li><svg class="ar shut"><use href="#chev"/></svg><label><input type="checkbox" class="part"><svg class="ti"><use href="#dge"/></svg><span>Members</span></label></li>
      </ul>
      <div class="vscroll"><svg class="up"><use href="#chev"/></svg><i></i><svg><use href="#chev"/></svg></div>
    </div>
    <div class="navtabs">
      <button aria-label="Data"><svg><use href="#fold"/></svg></button><button aria-label="Display"><svg><use href="#eye"/></svg></button><button aria-label="Views"><svg><use href="#cam"/></svg></button><button class="cur" aria-label="Results"><svg><use href="#dgc"/></svg></button>
    </div>
  </div>
</aside>

<div class="work">
  <section class="viewport" aria-label="Model view">
    <svg id="model" viewBox="324 168 1074 560" preserveAspectRatio="xMinYMin meet"></svg>
    <aside class="panel">
      <header><h3>Control Panel</h3><button aria-label="Close control panel"><svg><use href="#close"/></svg></button></header>
      <p>Display Factors<br>Results</p>
      <div class="factors">
        <div class="group"><button class="box" aria-label="Collapse By Member">−</button><h4>By Member</h4></div>
        <label class="factor"><span>Stresses</span><input value="1.00"><i></i></label>
        <label class="factor"><span>Stress Ratios</span><input value="1.00"><i><svg><use href="#left"/></svg></i></label>
        <div class="void"></div>
        <div class="group"><button class="box" aria-label="Collapse By Surface">−</button><h4>By Surface</h4></div>
        <label class="factor"><span>Stresses</span><input value="0.00"><i></i></label>
        <label class="factor"><span>Stress Ratios</span><input value="0.00"><i></i></label>
      </div>
      <div class="ptabs"><button class="cur" aria-label="Factors"><svg><use href="#scale"/></svg></button><button aria-label="Filter"><svg><use href="#list"/></svg></button></div>
    </aside>
  </section>

  <section class="tables">
    <header class="dock"><h2>Stresses on Members by Section</h2><button aria-label="Float tables"><svg><use href="#restore"/></svg></button><button aria-label="Close tables"><svg><use href="#close"/></svg></button></header>
    <nav class="menubar sub"><button>Go To</button><button>Edit</button><button>Selection</button><button>View</button><button>Settings</button></nav>
    <div class="toolbar sub">
      <label class="combo ta"><svg class="ci"><use href="#ssa"/></svg><select aria-label="Analysis"><option>Stress-Strain Analysis</option></select><svg class="chev"><use href="#chev"/></svg></label><button class="step" aria-label="Previous analysis"><svg><use href="#left"/></svg></button><button class="step" aria-label="Next analysis"><svg><use href="#right"/></svg></button>
      <i class="sep"></i>
      <label class="combo tm"><svg class="ci"><use href="#memb"/></svg><select aria-label="Table"><option>Stresses on Members</option></select><svg class="chev"><use href="#chev"/></svg></label><button class="step" aria-label="Previous table"><svg><use href="#left"/></svg></button><button class="step" aria-label="Next table"><svg><use href="#right"/></svg></button>
      <i class="sep"></i>
      <button class="tb on" aria-label="Select in view"><svg><use href="#sel1"/></svg></button>
      <button class="tb on" aria-label="Select in table"><svg><use href="#sel2"/></svg></button>
      <i class="sep slim"></i>
      <button class="tb on" aria-label="Show results"><svg><use href="#dge"/></svg></button>
      <button class="tb on" aria-label="Show values"><svg><use href="#dgx"/></svg></button>
      <i class="sep"></i>
      <button class="tb" aria-label="All rows"><svg><use href="#t1"/></svg></button>
      <button class="tb" aria-label="Grouped rows"><svg><use href="#t2"/></svg></button>
      <button class="tb on" aria-label="Selected rows"><svg><use href="#t3"/></svg></button>
      <i class="sep"></i>
      <button class="tb on" aria-label="Bars"><svg><use href="#bars"/></svg></button>
      <i class="sep"></i>
      <button class="tb" aria-label="Export to Excel"><svg><use href="#xls"/></svg></button>
      <i class="sep"></i>
      <button class="tb" aria-label="Table filter"><svg><use href="#funw"/></svg></button>
      <button class="tb" aria-label="Decimals"><svg><use href="#dec"/></svg></button>
      <i class="sep"></i>
      <button class="more end" aria-label="More table commands">»</button>
      <i class="sep slim"></i>
      <button class="tb" aria-label="Search"><svg><use href="#find"/></svg></button>
      <button class="more" aria-label="More search commands">»</button>
    </div>
    <div class="gridwrap">
      <table>
        <colgroup><col class="w74"><col class="w75"><col class="w100"><col class="w75"><col class="w79"><col class="w75"><col class="w75"><col class="w106"><col class="w100"><col class="w100"><col></colgroup>
        <thead>
          <tr class="strip"><td></td><td></td><td></td><td class="hot"></td><td></td><td></td><td></td><td></td><td></td><td></td><td></td></tr>
          <tr><th rowspan="2">Section<br>No.</th><th rowspan="2">Member<br>No.</th><th rowspan="2">Location<br>x [m]</th><th rowspan="2">Stress<br>Point No.</th><th rowspan="2" class="lf">Construction<br>Stage</th><th rowspan="2">Design<br>Situation</th><th rowspan="2">Loading<br>No.</th><th rowspan="2">Stress<br>Type</th><th colspan="2" class="top">Stress [N/mm<sup>2</sup>]</th><th rowspan="2">Stress<br>Ratio η [--]</th></tr>
          <tr><th class="half">Existing</th><th class="half">Limit</th></tr>
        </thead>
        <tbody>
          <tr class="grp"><th rowspan="2">1</th><td colspan="10"><div><i class="sw cyan"></i><b></b>CHS 1000/10/H | 1 - S355</div></td></tr>
          <tr><td>1</td><td class="n">0.000 <svg class="mk" viewBox="0 0 10 10"><path d="M0 1h10M5 3L1 7h8z" fill="#666" stroke="#666"/></svg></td><td>10</td><td>CS3</td><td>DS1</td><td>CO4</td><td class="sg"><div>σ<small>eqv,von Mises</small></div></td><td class="n"><i class="bar" style="width:5px"></i>64.268</td><td class="n">355.000</td><td class="n"><i class="bar ok" style="width:14px"></i><i class="tick"></i>0.181 <svg class="mk" viewBox="0 0 10 10"><path d="M1 5l3 4 6-7" fill="none" stroke="#22a022" stroke-width="2"/></svg></td></tr>
          <tr class="blank"><td colspan="11"></td></tr>
          <tr class="grp"><th rowspan="2">2</th><td colspan="10"><div><i class="sw gold"></i><b></b>CHS 600/10/H | 1 - S355</div></td></tr>
          <tr><td>2</td><td class="n">15.486 <span class="mk">½</span></td><td>1</td><td>CS3</td><td>DS1</td><td>CO4</td><td class="sg"><div>σ<small>eqv,von Mises</small></div></td><td class="n"><i class="bar" style="width:26px"></i>440.285</td><td class="n">355.000</td><td class="n"><i class="bar bad" style="width:95px"></i><i class="tick"></i>1.240 <svg class="mk" viewBox="0 0 10 12"><path d="M2 0h6L6 8H4zM3 9h4v3H3z" fill="#e01010"/></svg></td></tr>
        </tbody>
      </table>
      <div class="vscroll"><svg class="up"><use href="#chev"/></svg><i></i><svg><use href="#chev"/></svg></div>
    </div>
    <div class="hscroll"><svg class="lt"><use href="#chev"/></svg><i></i><svg class="rt"><use href="#chev"/></svg></div>
    <div class="sheets">
      <button class="go" aria-label="First table"><svg viewBox="0 0 10 9"><path d="M0 0h2v9H0zM10 0v9L3 4.500z"/></svg></button>
      <button class="go" aria-label="Previous sheet"><svg viewBox="0 0 10 9"><path d="M8 0v9L2 4.500z"/></svg></button>
      <span class="pos">5 of 8</span>
      <button class="go" aria-label="Next sheet"><svg viewBox="0 0 10 9"><path d="M2 0v9l6-4.500z"/></svg></button>
      <button class="go" aria-label="Last table"><svg viewBox="0 0 10 9"><path d="M8 0h2v9H8zM0 0v9l7-4.500z"/></svg></button>
      <div class="tabs"><button>Stresses by Construction Stage</button><button>Stresses by Design Situation</button><button>Stresses by Loading</button><button>Stresses by Material</button><button class="cur">Stresses by Section</button><button>Stresses by Member</button></div>
      <button class="scr pale" aria-label="Scroll tabs left"><svg viewBox="0 0 6 12"><path d="M6 0v12L0 6z"/></svg></button>
      <button class="scr" aria-label="Scroll tabs right"><svg viewBox="0 0 6 12"><path d="M0 0v12l6-6z"/></svg></button>
    </div>
  </section>
</div>
</main>

<footer class="status">
  <button class="on">SNAP</button><button>GRID</button><button class="on">LGRID</button><button class="on">OSNAP</button><span class="vis">Visibility mode</span><span class="blank"></span><span class="csys">CS: Global XYZ</span><span class="plane">Plane: XZ</span><span class="rest"></span>
  <svg class="size" viewBox="0 0 12 12"><path d="M9 0h2v2H9zM9 4h2v2H9zM5 4h2v2H5zM9 8h2v2H9zM5 8h2v2H5zM1 8h2v2H1z" fill="#b0b0b0"/></svg>
</footer>
<script src="model.js"></script>
</body>
</html>
```
FILE: styles.css
```css
* { box-sizing: border-box; }
html { height: 100%; }
body {
  margin: 0; min-height: 100%; height: 100vh; display: flex; flex-direction: column;
  font: 12px/16px "Noto Sans", "Open Sans", sans-serif; color: #111;
  background: #f7f7f7; border: 1px solid #9b9b9b; border-right-width: 2px; overflow: hidden;
}
button, select, input { font: inherit; color: inherit; margin: 0; padding: 0; border: 0; background: none; border-radius: 0; }
h1, h2, h3, h4, p, ul { margin: 0; padding: 0; font-size: inherit; font-weight: normal; }
ul { list-style: none; }
.defs { display: none; }
.paint { position: absolute; }
.ib { font: bold 12px "Liberation Sans", sans-serif; }
.ix, .ixg { font: bold 10px "Liberation Sans", sans-serif; }
.ixg { fill: #666; }
.cv { stroke-width: var(--cw, 1.3); }

/* title and menus */
.titlebar { display: flex; align-items: center; height: 38px; flex: none; background: #fff; padding-left: 8px; }
.logo { width: 20px; height: 20px; }
.titlebar h1 { font-size: 14px; line-height: 20px; color: #999; padding-left: 6px; }
.wincmds { margin-left: auto; display: flex; }
.wincmds button { width: 58px; height: 37px; }
.wincmds svg { width: 12px; height: 12px; fill: none; stroke: #888; }
.menubar { display: flex; align-items: center; height: 23px; flex: none; }
.menubar .flag { width: 20px; height: 14px; }
.menubar button { padding: 0 8px; height: 23px; }
.menubar.sub { border-bottom: 1px solid #e2e2ea; height: 26px; padding-top: 2px; }

/* toolbars */
.toolbar { display: flex; align-items: center; height: 35px; flex: none; border-top: 1px solid #e6e6e6; padding-bottom: 2px; }
.grip { width: 6px; height: 26px; margin: 0 3px; background: radial-gradient(circle at 2px 2px, #aaa 1px, transparent 1px) 0 0 / 6px 4px; flex: none; }
.tb { width: 31px; height: 29px; flex: none; display: grid; place-items: center; }
.tb svg { width: 24px; height: 24px; }
.on { background: #cce4f7; border: 1px solid #99ccf5; }
.dark { color: #555; fill: #555; }
.pale { color: #999; fill: #999; }
.flip svg { transform: scaleX(-1); }
.dd { width: 15px; height: 28px; flex: none; display: grid; place-items: center; }
.dd svg { width: 9px; height: 5px; }
.sep { width: 8px; height: 26px; flex: none; background: linear-gradient(#d2d2d8, #d2d2d8) center / 1px 100% no-repeat; }
.sep.line { width: 2px; height: 33px; }
.sep.slim { width: 3px; height: 33px; }
.more { width: 18px; font-size: 15px; line-height: 24px; color: #333; padding-bottom: 4px; }
.end { margin-left: auto; }
.combo { display: flex; align-items: center; height: 24px; background: #e6e6f3; }
.combo select { appearance: none; flex: 1; min-width: 0; height: 24px; padding-left: 5px; }
.chev { width: 10px; height: 6px; color: #444; margin-right: 5px; }
.ci { width: 20px; height: 20px; flex: none; margin: 0 0 0 4px; }
.sw { width: 14px; height: 14px; flex: none; margin-left: 4px; }
.cyan { background: #c4fdff; }
.rose { background: #b87070; }
.gold { background: #f5c400; }
.cs { width: 249px; margin-right: 2px; }
.lc { width: 337px; }
.uls { width: 38px; height: 16px; line-height: 16px; background: #cc6666; color: #fff; font-weight: normal; text-align: center; margin-left: 4px; }
.co { width: 48px; padding-left: 6px; border-right: 1px solid #fff; line-height: 24px; }
.step { width: 20px; height: 24px; flex: none; background: #e6e6f3; border-left: 1px solid #fff; display: grid; place-items: center; }
.step svg { width: 5px; height: 9px; }
.step.off { background: #cfcfcf; fill: #666; }

main { flex: 1; min-height: 0; margin-top: 1px; display: grid; grid-template-columns: 317px 1fr; column-gap: 6px; }
.dock { display: flex; align-items: center; height: 25px; flex: none; background: #d8e5f3; padding-left: 7px; }
.dock h2 { font-size: 14px; font-weight: bold; color: #3c3c3c; flex: 1; }
.dock button { width: 26px; height: 24px; display: grid; place-items: center; }
.dock svg { width: 11px; height: 11px; color: #333; }

/* navigator */
.navigator { display: flex; flex-direction: column; min-height: 0; padding-left: 1px; }
.navigator .dock { padding-left: 6px; }
.navframe { flex: 1; min-height: 0; display: flex; flex-direction: column; border: 2px solid #ccccd8; border-width: 1px 1px 1px 2px; }
.navcombo { display: flex; padding: 5px 2px 13px; }
.navcombo .combo { flex: 1; }
.tree { background: #fff; }
.grow { flex: 1; min-height: 0; overflow: hidden; }
.tree li { display: flex; align-items: center; height: 23px; padding-left: 6px; }
.tree li.l1 { padding-left: 31px; }
.tree li.l2 { padding-left: 76px; }
.tree li.leaf { padding-left: 26px; }
.tree label { display: flex; align-items: center; flex: 1; height: 23px; }
.ar { width: 12px; height: 7px; margin-right: 8px; color: #333; --cw: 1.7; }
.ar.shut { transform: rotate(-90deg); color: #999; }
.tree input { appearance: none; width: 17px; height: 17px; border: 1px solid #444; background: #fff; flex: none; margin-right: 5px; display: grid; place-items: center; }
.tree input[type="radio"] { border-radius: 50%; }
.tree input[type="radio"]:checked::before { content: ""; width: 9px; height: 9px; border-radius: 50%; background: #333; }
.tree input[type="checkbox"]:checked::before { content: ""; width: 12px; height: 6px; border: solid #333; border-width: 0 0 1px 1px; transform: rotate(-45deg); margin-bottom: 4px; }
.tree input.part { background: #c4e0f7; border-color: #3a7ab8; }
.ti { width: 22px; height: 22px; flex: none; margin-right: 4px; }
.tree span { padding-top: 3px; }
small { font-size: 11px; position: relative; top: 1px; }
.sel { background: linear-gradient(90deg, #fff 95px, #cce8ff 95px); }
.lower { display: flex; height: 88px; flex: none; overflow: hidden; border-top: 2px solid #f4f4f4; background: #fff; }
.lower .tree { flex: 1; }
.vscroll { width: 19px; background: #f0f0f0; display: flex; flex-direction: column; align-items: center; padding-bottom: 8px; flex: none; --cw: 1.6; }
.vscroll svg { width: 11px; height: 7px; margin-top: auto; color: #444; }
.vscroll .up { transform: rotate(180deg); margin: 8px 0 7px; }
.vscroll i { width: 19px; height: 22px; background: #cdcdcd; }
.navtabs { display: flex; align-items: flex-start; height: 29px; flex: none; border-top: 1px solid #c4c4d0; }
.navtabs button { width: 38px; height: 27px; background: #ececec; border: 1px solid #c8c8d4; border-width: 0 1px 1px 0; display: grid; place-items: center; }
.navtabs .cur { background: #fff; height: 29px; border-bottom: 0; margin-top: -1px; }
.navtabs svg { width: 20px; height: 20px; }
.navtabs button:nth-child(2) svg { width: 17px; height: 12px; }

/* model view */
.work { display: flex; flex-direction: column; min-width: 0; min-height: 0; }
.viewport { flex: 1; min-height: 0; background: #fff; position: relative; overflow: hidden; }
#model { display: block; width: 100%; height: 100%; }
#model text { font: 12px "Noto Sans", sans-serif; }
.panel { position: absolute; top: 140px; right: 2px; width: 300px; height: 399px; display: flex; flex-direction: column; background: #fff; border: 1px solid #c6c6d2; border-top: 1px solid #777; box-shadow: 0 0 12px #999; }
.panel header { display: flex; height: 38px; border-bottom: 1px solid #ccccd8; flex: none; }
.panel h3 { font-size: 13px; flex: 1; padding: 11px 8px; }
.panel header button { width: 25px; height: 25px; margin-top: 8px; background: #c75050; color: #fff; }
.panel header svg { width: 8px; height: 8px; }
.panel p { padding: 5px 10px 10px; line-height: 17px; height: 49px; flex: none; }
.factors { flex: 1; background: linear-gradient(90deg, #e2e2e2 21px, #fff 21px); }
.group { display: flex; align-items: center; height: 20px; background: #e3e3e3; }
.box { width: 11px; height: 11px; border: 1px solid #777; background: #fff; line-height: 9px; margin-left: 5px; font-size: 10px; }
.group h4 { padding-left: 11px; padding-top: 1px; }
.factor { display: flex; height: 20px; margin-left: 21px; background: #faf9f5; line-height: 21px; }
.factor span { flex: 1; margin-left: 14px; padding-left: 17px; background: linear-gradient(#ccc, #ccc) 0 10px / 12px 1px no-repeat; border-left: 1px dotted #bbb; }
.factor input { width: 77px; text-align: right; padding-right: 3px; border: solid #d8d8dc; border-width: 0 1px; background: #fff; }
.factor i { width: 25px; fill: #f00; display: grid; place-items: center; }
.factor i svg { width: 9px; height: 11px; }
.void { height: 20px; margin-left: 21px; background: #fff; }
.ptabs { display: flex; height: 29px; flex: none; background: #f7f7f7; border-top: 1px solid #ccccd8; }
.ptabs button { width: 39px; height: 27px; background: #ececec; border: 1px solid #c8c8d4; border-top: 0; display: grid; place-items: center; }
.ptabs .cur { background: #fff; border: 0; margin-top: -1px; height: 29px; }
.ptabs svg { width: 20px; height: 20px; }

/* result table */
.tables { flex: none; display: flex; flex-direction: column; min-width: 0; border-right: 1px solid #e0e0e8; }
.toolbar.sub { height: 33px; border: 0; padding-left: 2px; padding-bottom: 0; }
.ta { width: 209px; }
.tm { width: 297px; margin-left: 4px; margin-right: 1px; }
.toolbar.sub .step + .sep { width: 9px; }
.gridwrap { display: flex; height: 156px; overflow: hidden; border: 1px solid #ccccd8; border-bottom: 0; background: #fff; }
table { flex: 1; border-collapse: collapse; table-layout: fixed; width: 100px; height: 100px; margin-right: 4px; }
.w74 { width: 74px; } .w75 { width: 75px; } .w79 { width: 79px; } .w100 { width: 100px; } .w106 { width: 106px; }
td, th { padding: 0; font-weight: normal; text-align: center; border-right: 1px solid #dcdcdc; border-bottom: 1px solid #dcdcdc; }
tr { height: 20px; }
.strip { height: 12px; }
.strip td { height: 12px; background: #e0e0e0; border-color: #fff; }
.strip .hot { background: #c6c6c6; }
thead th { background: #f0f0f0; border-color: #ccc; line-height: 17px; padding-top: 4px; }
thead th:first-child[rowspan], tbody th { background: #e0e0e0; border-color: #e0e0e0; }
.lf { text-align: left; padding-left: 4px; white-space: nowrap; }
thead .top, thead .half { padding: 0; height: 20px; }
thead .half { padding-top: 2px; }
thead .top { border-bottom: 0; }
sup { font-size: 10px; line-height: 0; }
tbody td { padding-top: 2px; }
tbody th { vertical-align: top; line-height: 20px; }
.grp td { background: #e6f0fa; border-right: 0; padding: 0; }
.grp div { display: flex; align-items: center; height: 19px; padding-top: 1px; }
.grp .sw { margin-left: 4px; }
.grp b { width: 11px; height: 11px; border: 1px solid #2b2b9a; border-radius: 50%; margin: 0 8px 0 5px; }
.blank td { border: 0; background: #fff; }
.n { text-align: right; padding-right: 5px; position: relative; }
.mk { display: inline-block; width: 11px; height: 10px; vertical-align: -1px; margin-left: 1px; font-size: 12px; line-height: 10px; }
.sg div { text-align: left; padding-left: 4px; white-space: nowrap; }
.bar { position: absolute; left: 5px; top: 2px; height: 15px; background: #ffb9b9; }
.bar.ok { background: #c2f5c2; }
.bar.bad { background: #ffa8a8; }
.tick { position: absolute; left: 85px; top: 2px; width: 1px; height: 15px; background: #888; }
.gridwrap .vscroll i { height: 33px; }
.hscroll { display: flex; align-items: center; height: 20px; background: #f0f0f0; border: 1px solid #ccccd8; border-width: 0 1px 1px; --cw: 1.6; }
.hscroll svg { width: 10px; height: 6px; margin: 0 5px; color: #444; flex: none; }
.hscroll i { width: 77%; height: 18px; background: #cdcdcd; margin-right: auto; }
.lt { transform: rotate(90deg); } .rt { transform: rotate(-90deg); }
.sheets { display: flex; align-items: center; height: 28px; }
.go { width: 21px; fill: #333; flex: none; }
.go svg { width: 10px; height: 9px; }
.pos { width: 69px; text-align: center; flex: none; padding-top: 2px; }
.tabs { flex: 1; min-width: 0; display: flex; overflow: hidden; height: 25px; }
.tabs button { flex: none; padding: 2px 10px 0; background: #efefef; border: 1px solid #d4d4da; border-left: 0; height: 24px; }
.tabs .cur { background: #fff; height: 25px; padding-top: 3px; }
.scr { width: 18px; flex: none; }
.scr svg { width: 6px; height: 12px; }

.status { display: flex; align-items: flex-end; height: 27px; flex: none; padding: 0 2px 0 404px; line-height: 22px; }
.status > button, .status > span { padding: 0 5px; border: 1px solid #ccccd0; border-width: 1px 0 0 1px; height: 24px; }
.status > button { margin-right: 2px; }
.status button:not(.on) { border-color: transparent; }
.status .on { background: #eee; border-color: #bbb; }
.status > span { border-top-color: transparent; }
.status > .vis { border-color: transparent; width: 99px; padding-left: 2px; }
.status .blank { width: 131px; }
.status .csys { width: 194px; padding-left: 4px; }
.status .plane { width: 167px; padding-left: 4px; }
.status .rest { flex: 1; }
.size { width: 12px; height: 12px; }
```
FILE: model.js
```js
// Draws the structural model, its result diagrams and the view cube.
const G = '#008000', R = '#ff0000', B = '#7a8cf0';
const out = [];
const pts = a => a.map(p => p.join(',')).join(' ');
const poly = (a, c, w = 1, x = '') => out.push(`<polyline points="${pts(a)}" fill="none" stroke="${c}" stroke-width="${w}" ${x}/>`);
const fill = (a, c, o = 1) => out.push(`<polygon points="${pts(a)}" fill="${c}" fill-opacity="${o}"/>`);

function along(line, t) {
  const len = [];
  let sum = 0;
  for (let i = 1; i < line.length; i++) {
    const d = Math.hypot(line[i][0] - line[i - 1][0], line[i][1] - line[i - 1][1]);
    len.push(d); sum += d;
  }
  let s = t * sum;
  for (let i = 0; i < len.length; i++) {
    if (s <= len[i] || i === len.length - 1) {
      const k = s / len[i];
      return [line[i][0] + (line[i + 1][0] - line[i][0]) * k, line[i][1] + (line[i + 1][1] - line[i][1]) * k];
    }
    s -= len[i];
  }
}

const rung = (p, q) => `M${p[0].toFixed(1)} ${p[1].toFixed(1)}L${q[0].toFixed(1)} ${q[1].toFixed(1)}`;

// A diagram between two polylines, divided into n ordinates.
function band(a, b, n, c, o = {}) {
  if (o.fill) fill([...a, ...[...b].reverse()], o.fill, o.alpha || 0.8);
  let d = '';
  for (let i = o.skip || 0; i <= n; i++) d += rung(along(a, i / n), along(b, i / n));
  out.push(`<path d="${d}" stroke="${c}" stroke-width="${o.w || 0.7}" fill="none" stroke-opacity="${o.so || 0.85}"/>`);
  poly(a, o.edge || c, 0.9); poly(b, c, 0.9);
}

// A diagram whose two edges have matching vertices; step is the ordinate spacing.
function pairs(a, b, step, c, o = {}) {
  if (o.fill) fill([...a, ...[...b].reverse()], o.fill, o.alpha || 0.8);
  let d = '';
  for (let i = 1; i < a.length; i++) {
    const n = Math.max(1, Math.round(Math.hypot(a[i][0] - a[i - 1][0], a[i][1] - a[i - 1][1]) / step));
    for (let k = 0; k < n; k++) d += rung(along([a[i - 1], a[i]], k / n), along([b[i - 1], b[i]], k / n));
  }
  out.push(`<path d="${d}" stroke="${c}" stroke-width="${o.w || 0.7}" fill="none" stroke-opacity="${o.so || 0.85}"/>`);
  poly(a, o.edge || c, 0.9); poly(b, c, 0.9);
}

const dash = a => poly(a, '#a4c8f0', 1, 'stroke-dasharray="12 5"');
dash([[457, 436], [600, 556], [661, 533], [604, 262]]);
dash([[438, 440], [450, 623], [600, 566], [803, 487]]);
dash([[625, 240], [689, 524], [803, 481]]);
dash([[700, 335], [735, 380], [808, 472], [985, 423]]);
dash([[450, 425], [540, 345], [597, 260]]);
dash([[625, 242], [770, 330], [860, 370]]);

// stay from the left node to the anchor
band([[423, 422], [337, 654]], [[423, 445], [345, 657]], 8, G, { edge: B, skip: 1 });
poly([[395, 497], [360, 591]], G); poly([[350, 619], [337, 654]], G);
// back stay
band([[423, 422], [602, 206]], [[440, 419], [612, 214]], 9, G, { fill: '#f6fbf6' });
poly([[423, 422], [480, 353]], B);
// left cable
pairs([[423, 422], [455, 407], [500, 377], [540, 334], [568, 288], [584, 240], [602, 206]],
      [[430, 432], [463, 419], [510, 386], [552, 342], [582, 296], [600, 250], [606, 206]], 3.4, G);
poly([[430, 421], [460, 407], [505, 378]], B);
// struts to the supports
poly([[423, 424], [438, 642]], G, 2);
poly([[426, 424], [439, 642]], G);
band([[423, 422], [511, 573]], [[424, 440], [505, 585]], 9, G, { edge: '#7fb08f', fill: '#f3f8f3', skip: 1 });
band([[428, 428], [598, 569]], [[428, 434], [467, 474], [540, 533], [592, 575]], 62, G, { edge: B });
// strut with exceeded ratio
fill([[423, 422], [440, 440], [473, 482], [450, 482]], '#eef5ee');
fill([[473, 482], [556, 580], [543, 594], [496, 545], [457, 490]], '#fdecec', 0.8);
poly([[423, 422], [598, 635]], '#2d6a78', 1.3);
poly([[473, 482], [551, 579]], R, 1);
poly([[473, 481], [556, 580]], B);
poly([[423, 430], [460, 496]], G); poly([[460, 496], [496, 545], [540, 593]], R); poly([[540, 593], [600, 640]], G);
out.push(`<path d="M456 476L467 468M476 516L489 503M496 545L511 530M519 571L533 557" stroke="${R}" stroke-width=".8"/>`);
out.push(`<path d="M545 595L556 583M570 618L578 612" stroke="${G}"/>`);

// mast
poly([[599.500, 206], [599.500, 637]], B, 1.200);
poly([[602.500, 206], [602.500, 640]], '#5db05d', 2.200);
// long struts
band([[423, 422], [700, 406], [1080, 387]], [[423, 422], [700, 411], [1080, 394]], 10, G, { edge: G });
poly([[560, 414], [700, 406]], B); poly([[960, 393], [1080, 387]], B);
band([[423, 422], [995, 423]], [[423, 425], [700, 427], [995, 428]], 10, G, { edge: B });

// verticals and diagonals of the sail frame
band([[604, 225], [639, 400], [674, 545]], [[608, 240], [645, 400], [679, 545]], 60, G);
band([[606, 232], [680, 342], [728, 400], [796, 493]], [[618, 230], [700, 345], [737, 400], [803, 491]], 52, G, { edge: B });

// bottom beam: left span, then the span to the right support
band([[439, 640], [598, 577]], [[447, 653], [472, 643], [600, 592]], 42, G, { edge: B });
const beamTop = [[600, 567], [677, 540], [700, 531], [780, 500], [850, 476], [957, 436], [997, 425]];
const beamBot = [[600, 591], [680, 557], [706, 546], [787, 516], [856, 492], [960, 459], [1000, 443]];
pairs(beamTop, beamBot, 3.8, G);
band([[600, 577], [700, 541], [803, 500], [900, 466], [997, 426]], [[600, 585], [700, 545], [803, 508], [900, 472], [997, 432]], 60, '#2d8a3d', { so: 0.4 });
poly([[598, 577], [800, 499], [995, 425]], B);

// red cables
band([[602, 206], [1056, 378]], [[598, 226], [1048, 400]], 14, R, { fill: '#f9eaea', alpha: 0.5 });
band([[602, 206], [995, 425]], [[598, 228], [990, 441]], 14, R, { fill: '#f9eaea', alpha: 0.6 });
const sagTop = [[602, 222], [640, 248], [680, 270], [722, 297], [765, 322], [808, 346], [855, 367], [900, 382], [946, 393], [990, 400], [1036, 405]];
const sagBot = [[590, 284], [622, 306], [657, 326], [700, 350], [748, 373], [800, 388], [850, 402], [893, 413], [943, 418], [990, 422], [1036, 410]];
pairs(sagTop, sagBot, 5.2, R, { fill: '#fdeeee', alpha: 0.5, edge: '#c88ab4', w: 0.8 });
poly([[722, 297], [765, 322], [808, 346]], B); poly([[946, 393], [990, 400], [1036, 405]], B);
out.push(`<path d="M677 272L654 325M680 274L657 325M763 323L748 372M767 325L752 374M808 348L801 388M853 368L847 401M856 369L850 402" stroke="${R}" stroke-width="1.300"/>`);
poly([[797, 315], [860, 350], [995, 425]], B); poly([[960, 342], [1056, 378], [1080, 387]], B);
band([[602, 206], [580, 218], [566, 254]], [[612, 232], [614, 262], [602, 292]], 13, R, { fill: '#f3d4d4', alpha: 0.4 });
poly([[566, 254], [602, 292]], R); poly([[602, 206], [614, 290]], R);
fill([[592, 216], [602, 206], [614, 224], [608, 250], [598, 240]], '#8a7070', 0.35);
poly([[1036, 407], [1036, 425]], R, 2);

// solid diagram at the right edge
fill([[1002, 424], [1077, 389], [1079, 404], [1050, 418], [1018, 433], [998, 443]], '#007a00');
band([[1002, 424], [1077, 389]], [[1000, 442], [1079, 404]], 24, '#2a9a2a', { w: 0.6 });
fill([[994, 414], [1007, 414], [1007, 429], [994, 425]], '#0b9a0b');
fill([[1077, 378], [1091, 378], [1091, 391], [1077, 390]], '#16c41c');
poly([[1076, 387], [1083, 402], [1076, 406]], G);

// supports, nodes and extreme value marks
for (const [x, y] of [[337, 656], [439, 646], [511, 578], [598, 574], [600, 642]])
  out.push(`<path d="M${x - 2} ${y - 3}h5l2 6q4 2 5 4q-9 4-19 0q4-2 5-4z" fill="#2fc437" stroke="#17962a" stroke-width=".6"/><rect x="${x - 1}" y="${y - 5}" width="3" height="3" fill="red"/>`);
for (const [x, y] of [[603, 206], [523, 369], [421, 424], [414, 433], [435, 432], [472, 642], [505, 585], [590, 574], [666, 513], [777, 464], [679, 556], [840, 495], [957, 458], [344, 657], [604, 639], [995, 441], [1063, 411]])
  out.push(`<rect x="${x - 2}" y="${y - 2}" width="5" height="5" fill="${G}"/>`);
for (const [x, y] of [[602, 205], [580, 218], [594, 283], [423, 422], [496, 545], [677, 547], [803, 491], [995, 424], [1076, 387], [1036, 425]])
  out.push(`<rect x="${x - 1}" y="${y - 1}" width="4" height="4" fill="${R}"/>`);
out.push('<circle cx="596" cy="634" r="3" fill="#55b8c8" stroke="#087888" stroke-width="2"/>');

const label = (x, y, s, c) => out.push(`<text x="${x}" y="${y}" fill="${c}">${s}</text>`);
[[613, 220, '0.754'], [525, 373, '0.483'], [436, 436, '0.746'], [398, 450, '0.794'], [345, 663, '0.714'], [472, 590, '0.714'],
 [423, 658, '0.493'], [457, 658, '0.699'], [574, 590, '0.493'], [612, 589, '0.699'], [605, 644, '0.181'], [634, 518, '0.270'],
 [744, 469, '0.270'], [665, 573, '0.485'], [791, 516, '0.485'], [825, 511, '0.491'], [942, 475, '0.931']].forEach(l => label(...l, G));
[[560, 218, '1.161'], [581, 241, '1.096'], [579, 299, '3.531'], [482, 561, '1.240'], [976, 460, '1.092'], [1022, 442, '1.050'], [1056, 424, '1.092']].forEach(l => label(...l, R));

// view cube
const K = '#2a2a2a';
fill([[1257, 213], [1331, 223], [1331, 303], [1257, 292]], '#dcdcdc');
fill([[1257, 213], [1300, 195], [1373, 205], [1331, 223]], '#b8b8b8');
fill([[1331, 223], [1373, 205], [1373, 285], [1331, 303]], '#cccccc');
fill([[1341, 241], [1362, 231], [1362, 270], [1341, 279]], '#b9b9b9');
[[[1257, 213], [1331, 223], [1331, 303], [1257, 292], [1257, 213], [1300, 195], [1373, 205], [1373, 285], [1331, 303]],
 [[1331, 223], [1373, 205]], [[1275, 294], [1275, 216], [1317, 197]], [[1312, 300], [1312, 221], [1353, 202]],
 [[1257, 233], [1331, 244], [1373, 226]], [[1257, 273], [1331, 283], [1373, 265]],
 [[1268, 209], [1341, 219], [1341, 298]], [[1289, 200], [1362, 210], [1362, 290]]].forEach(l => poly(l, K, 1.6));
out.push('<text x="1285" y="268" style="font:bold 16px \'Liberation Sans\'" fill="#7be87b">-Y</text>');
out.push('<text x="1344" y="263" style="font:bold 15px \'Liberation Sans\'" fill="#f08080">-X</text>');
out.push('<text x="1309" y="214" style="font:bold 9px \'Liberation Sans\'" fill="#9a9ad8">-Z</text>');

document.getElementById('model').innerHTML = out.join('');
```
